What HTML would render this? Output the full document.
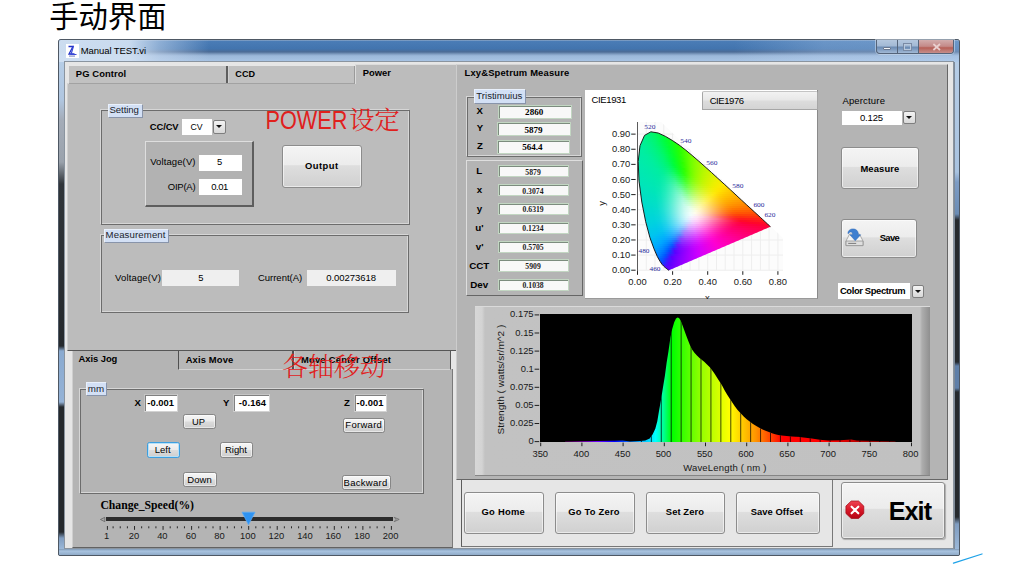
<!DOCTYPE html>
<html lang="zh"><head><meta charset="utf-8"><title>手动界面 - Manual TEST.vi</title>
<style>
html,body{margin:0;padding:0}
body{width:1016px;height:574px;background:#fff;position:relative;overflow:hidden;font-family:'Liberation Sans','Noto Sans CJK SC',sans-serif;color:#000}
body>div,body>span,body>svg{position:absolute;box-sizing:border-box}
.t{white-space:nowrap;line-height:1;display:block}
.btn{border:1px solid #8c8c8c;border-radius:3px;background:linear-gradient(#f4f4f4 0%,#ececec 46%,#dedede 48%,#d0d0d0 100%);box-shadow:inset 0 0 0 1px rgba(255,255,255,.55)}
.sbtn{border:1px solid #868686;border-radius:2.5px;background:linear-gradient(#f6f6f6 0%,#ebebeb 48%,#dcdcdc 52%,#cecece 100%);box-shadow:inset 0 0 0 1px rgba(255,255,255,.5)}
.grp{border:1px solid #6c6c6c;box-shadow:-1px -1px 0 #d6d6d6,inset -1px -1px 0 #d6d6d6}
.lbl{background:#d3e0f5;box-shadow:1px 1px 0 #8894aa,inset 1px 1px 0 #e9f0fb}
.wh{background:#fff}
.ind{background:#f8f8f8;border:1.2px solid #c2d6c2;box-shadow:inset 1px 1px 0 #7c8c7e}
.dd{border:1px solid #7e7e7e;background:linear-gradient(#f4f4f4,#d8d8d8);border-radius:2px}
.dd:after{content:"";position:absolute;left:50%;top:50%;margin:-1.6px 0 0 -3px;border:3px solid transparent;border-top:3.6px solid #111;border-bottom:0}

</style></head>
<body>
<div style="left:58px;top:39px;width:902px;height:516.5px;border-radius:3px 3px 2px 2px;background:#b3cbe5;border:1px solid #4e5864;"></div>
<div style="left:59px;top:40px;width:900px;height:22px;border-radius:2px 2px 0 0;background:linear-gradient(180deg,#93abc9 0,#4a7cb6 6%,#4274ae 40%,#4c6b95 54%,#7f9cc0 64%,#9cb8da 72%,#a9c5e5 100%);"></div>
<div style="left:59px;top:40px;width:900px;height:22px;border-radius:2px 2px 0 0;background:linear-gradient(90deg,rgba(208,224,242,.97) 0,rgba(208,224,242,.95) 70px,rgba(200,218,240,.55) 100px,rgba(200,218,240,0) 150px,rgba(200,218,240,0) 60%,rgba(190,215,245,.0) 75%,rgba(190,215,245,.28) 85%,rgba(190,215,245,.3) 100%);"></div>
<div style="left:59px;top:62px;width:5.5px;height:487px;background:linear-gradient(180deg,#b6cde6 0,#b0c6e0 38px,#a4acb8 58px,#9aa2ac 100px,#30353a 122px,#25292d 284px,#8aaad0 289px,#94b2d6 340px,#25292d 345px,#25292d 470px,#7f9cc0 476px,#9bb8d8 100%);border-right:1px solid #7e8a98"></div>
<div style="left:953.5px;top:62px;width:5.5px;height:487px;background:linear-gradient(180deg,#b6cde6 0,#a9c3e0 110px,#7d9cc4 120px,#6a8cb5 152px,#25292d 158px,#25292d 300px,#5f7fa8 304px,#5f7fa8 326px,#25292d 330px,#25292d 455px,#7f9cc0 462px,#9bb8d8 100%);border-left:1px solid #7e8a98"></div>
<div style="left:59px;top:549px;width:900px;height:6px;background:linear-gradient(180deg,#7f9ab8 0,#a9c3df 35%,#8fabc9 100%);border-radius:0 0 2px 2px"></div>
<div style="left:876.4px;top:39.5px;width:77.2px;height:14.5px;border:1px solid #55647a;border-top:0;border-radius:0 0 4px 4px;background:linear-gradient(#b4c7de 0,#a3b9d5 45%,#6c8bb3 55%,#7d9abf 70%,#a2b9d5 100%);overflow:hidden;box-shadow:0 0 0 1px rgba(220,232,246,.5)"><div style="position:absolute;left:20px;top:0;width:1px;height:14px;background:#55647a"></div><div style="position:absolute;left:40.5px;top:0;width:1px;height:14px;background:#55647a"></div><div style="position:absolute;left:41.5px;top:0;width:36px;height:14px;background:linear-gradient(#d2acac 0,#c48a88 45%,#b65e56 56%,#bd7670 72%,#c99694 100%)"></div></div>
<div style="left:883px;top:47.2px;width:8.2px;height:3px;background:#f4f6fa;border:.7px solid #6a7890;border-radius:1px"></div>
<div style="left:903.8px;top:44px;width:7.5px;height:6px;border:1.6px solid #b9c9dd;outline:.6px solid #7a8aa4;outline-offset:-.3px"></div>
<svg style="left:929px;top:42px" width="16" height="10" viewBox="0 0 16 10"><path d="M4.4 2L11 8M11 2L4.4 8" stroke="#ead0cf" stroke-width="1.7" fill="none"/></svg>
<svg style="left:0;top:0" width="1016" height="574"><rect x="64.4" y="44.6" width="12.5" height="12.3" fill="#fff"/><path d="M66.3 46H70.2L66.5 53.4" stroke="#3a5cd0" stroke-width="1.3" fill="none"/><path d="M73.1 46L69.4 53.2H74.8" stroke="#1a2cc0" stroke-width="1.7" fill="none"/><path d="M68.2 55.4h1M70 55.4h.8M71.6 55.4h1.4" stroke="#7484cc" stroke-width="1"/></svg>
<div style="left:58px;top:39px;width:902px;height:516.5px;border-radius:3px 3px 2px 2px;background:#b3cbe5;border:1px solid #4e5864;"></div>
<div style="left:59px;top:40px;width:900px;height:22px;border-radius:2px 2px 0 0;background:linear-gradient(180deg,#93abc9 0,#4a7cb6 6%,#4274ae 40%,#4c6b95 54%,#7f9cc0 64%,#9cb8da 72%,#a9c5e5 100%);"></div>
<div style="left:59px;top:40px;width:900px;height:22px;border-radius:2px 2px 0 0;background:linear-gradient(90deg,rgba(208,224,242,.97) 0,rgba(208,224,242,.95) 70px,rgba(200,218,240,.55) 100px,rgba(200,218,240,0) 150px,rgba(200,218,240,0) 60%,rgba(190,215,245,.0) 75%,rgba(190,215,245,.28) 85%,rgba(190,215,245,.3) 100%);"></div>
<div style="left:59px;top:62px;width:5.5px;height:487px;background:linear-gradient(180deg,#b6cde6 0,#b0c6e0 38px,#a4acb8 58px,#9aa2ac 100px,#30353a 122px,#25292d 284px,#8aaad0 289px,#94b2d6 340px,#25292d 345px,#25292d 470px,#7f9cc0 476px,#9bb8d8 100%);border-right:1px solid #7e8a98"></div>
<div style="left:953.5px;top:62px;width:5.5px;height:487px;background:linear-gradient(180deg,#b6cde6 0,#a9c3e0 110px,#7d9cc4 120px,#6a8cb5 152px,#25292d 158px,#25292d 300px,#5f7fa8 304px,#5f7fa8 326px,#25292d 330px,#25292d 455px,#7f9cc0 462px,#9bb8d8 100%);border-left:1px solid #7e8a98"></div>
<div style="left:59px;top:549px;width:900px;height:6px;background:linear-gradient(180deg,#7f9ab8 0,#a9c3df 35%,#8fabc9 100%);border-radius:0 0 2px 2px"></div>
<div style="left:876.4px;top:39.5px;width:77.2px;height:14.5px;border:1px solid #55647a;border-top:0;border-radius:0 0 4px 4px;background:linear-gradient(#b4c7de 0,#a3b9d5 45%,#6c8bb3 55%,#7d9abf 70%,#a2b9d5 100%);overflow:hidden;box-shadow:0 0 0 1px rgba(220,232,246,.5)"><div style="position:absolute;left:20px;top:0;width:1px;height:14px;background:#55647a"></div><div style="position:absolute;left:40.5px;top:0;width:1px;height:14px;background:#55647a"></div><div style="position:absolute;left:41.5px;top:0;width:36px;height:14px;background:linear-gradient(#d2acac 0,#c48a88 45%,#b65e56 56%,#bd7670 72%,#c99694 100%)"></div></div>
<div style="left:883px;top:47.2px;width:8.2px;height:3px;background:#f4f6fa;border:.7px solid #6a7890;border-radius:1px"></div>
<div style="left:903.8px;top:44px;width:7.5px;height:6px;border:1.6px solid #b9c9dd;outline:.6px solid #7a8aa4;outline-offset:-.3px"></div>
<svg style="left:929px;top:42px" width="16" height="10" viewBox="0 0 16 10"><path d="M4.4 2L11 8M11 2L4.4 8" stroke="#ead0cf" stroke-width="1.7" fill="none"/></svg>
<svg style="left:66px;top:44px" width="13" height="14" viewBox="0 0 13 14"><rect width="13" height="14" fill="#fff"/><path d="M2.5 2.5H7L3 10H8.5" stroke="#2233c8" stroke-width="1.3" fill="none"/><path d="M7.5 2L5 10.5H10.5" stroke="#3a4ad8" stroke-width="1.2" fill="none"/><rect x="3" y="11.5" width="6" height="1.2" fill="#8a94c8"/></svg>
<div style="left:64px;top:61px;width:890px;height:488px;background:#e6e6e6;border:1px solid #8a949f;"></div>
<div style="left:67px;top:83px;width:389px;height:268px;background:#bcbcbc;border-top:1px solid #d6d6d6;border-left:1px solid #d0d0d0;border-bottom:1px solid #565656;"></div>
<div style="left:69px;top:66px;width:286px;height:17.5px;background:#c1c1c1;border-bottom:1px solid #a2a2a2;border-right:1px solid #9a9a9a;"></div>
<div style="left:226px;top:66px;width:1.5px;height:17px;background:#5e5e5e"></div>
<div style="left:227.5px;top:66px;width:1px;height:17px;background:#d0d0d0"></div>
<div style="left:355px;top:63.5px;width:101px;height:20.5px;background:#bcbcbc;border-top:1px solid #dcdcdc;border-left:1px solid #dcdcdc;"></div>
<div class="grp" style="left:100.5px;top:110.2px;width:309px;height:114.4px;"></div>
<div class="lbl" style="left:108px;top:103.5px;width:33.5px;height:13.8px;"></div>
<div class="wh" style="left:181.8px;top:119px;width:30px;height:15.6px;"></div>
<div class="dd" style="left:212.7px;top:120px;width:12.9px;height:13.9px;"></div>
<div style="left:145px;top:141px;width:109.3px;height:65.8px;background:#b2b2b2;border-top:1px solid #dedede;border-left:1px solid #dedede;border-right:2px solid #5e5e5e;border-bottom:2px solid #5e5e5e;"></div>
<div class="wh" style="left:199px;top:155px;width:43px;height:16px;"></div>
<div class="wh" style="left:199px;top:179px;width:43px;height:16px;"></div>
<div class="btn" style="left:282.2px;top:145.4px;width:79.6px;height:42.9px;"></div>
<div class="grp" style="left:100.8px;top:235.3px;width:308.7px;height:77.3px;"></div>
<div class="lbl" style="left:104.3px;top:228.7px;width:63.8px;height:13.6px;"></div>
<div style="left:162.1px;top:270px;width:77.3px;height:16.4px;background:#efefef"></div>
<div style="left:306.7px;top:270px;width:89.8px;height:16.4px;background:#efefef"></div>
<div style="left:71.5px;top:351px;width:381px;height:196.5px;background:#b4b4b4;border-left:1px solid #cfcfcf;border-bottom:1.4px solid #626262;border-right:1px solid #7a7a7a;"></div>
<div style="left:178px;top:351px;width:273px;height:18.5px;background:#b7b7b7;border-left:1.5px solid #505050;border-bottom:1px solid #d2d2d2;border-right:1.5px solid #585858;"></div>
<div style="left:451px;top:351px;width:2px;height:18.3px;background:#e6e6e6"></div>
<div style="left:292px;top:351px;width:1.5px;height:18px;background:#505050"></div>
<div style="left:293.5px;top:351px;width:1px;height:18px;background:#cdcdcd"></div>
<div class="grp" style="left:80.3px;top:388.8px;width:344.2px;height:104.8px;"></div>
<div class="lbl" style="left:85.8px;top:381.9px;width:20.4px;height:13.3px;"></div>
<div style="left:143.6px;top:394.4px;width:34px;height:17.6px;background:#fff;border:1.6px solid #c5c5c5;border-right-color:#d2d2d2;border-bottom-color:#d2d2d2;box-shadow:inset 1px 1px 0 #808080"></div>
<div style="left:232.7px;top:394.4px;width:37.3px;height:17.6px;background:#fff;border:1.6px solid #c5c5c5;border-right-color:#d2d2d2;border-bottom-color:#d2d2d2;box-shadow:inset 1px 1px 0 #808080"></div>
<div style="left:353.6px;top:394.4px;width:33px;height:17.6px;background:#fff;border:1.6px solid #c5c5c5;border-right-color:#d2d2d2;border-bottom-color:#d2d2d2;box-shadow:inset 1px 1px 0 #808080"></div>
<div class="sbtn" style="left:183px;top:414px;width:32.8px;height:15.2px;"></div>
<div class="sbtn" style="left:342.7px;top:418px;width:42.8px;height:15.2px;"></div>
<div class="sbtn" style="left:147px;top:442px;width:33.2px;height:15.6px;border-color:#3c9fe0;box-shadow:inset 0 0 0 1px #b6e0f8;"></div>
<div class="sbtn" style="left:220px;top:442px;width:32.8px;height:15.6px;"></div>
<div class="sbtn" style="left:183.4px;top:472px;width:33.2px;height:15.2px;"></div>
<div class="sbtn" style="left:341.9px;top:475.3px;width:48.7px;height:14.9px;"></div>
<div style="left:106px;top:517.3px;width:286.5px;height:3.3px;background:#2c2c2c"></div>
<svg style="left:0;top:0" width="1016" height="574"><path d="M104.8 517.3L100.4 519.5L104.8 521.7Z" fill="#a9a9a9" stroke="#666" stroke-width=".8"/><path d="M394.2 517.3L399.2 519.4L394.2 521.7L396 519.4Z" fill="#b0b0b0" stroke="#6a6a6a" stroke-width=".8"/></svg>
<svg style="left:0;top:0" width="1016" height="574" fill="#2a2a2a"><rect x="106.90" y="526" width="1" height="3.8"/><rect x="112.61" y="526.3" width="1" height="2"/><rect x="119.74" y="526.3" width="1" height="2"/><rect x="126.88" y="526.3" width="1" height="2"/><rect x="134.01" y="526" width="1" height="3.8"/><rect x="141.15" y="526.3" width="1" height="2"/><rect x="148.29" y="526.3" width="1" height="2"/><rect x="155.42" y="526.3" width="1" height="2"/><rect x="162.56" y="526" width="1" height="3.8"/><rect x="169.69" y="526.3" width="1" height="2"/><rect x="176.83" y="526.3" width="1" height="2"/><rect x="183.96" y="526.3" width="1" height="2"/><rect x="191.10" y="526" width="1" height="3.8"/><rect x="198.23" y="526.3" width="1" height="2"/><rect x="205.37" y="526.3" width="1" height="2"/><rect x="212.51" y="526.3" width="1" height="2"/><rect x="219.64" y="526" width="1" height="3.8"/><rect x="226.78" y="526.3" width="1" height="2"/><rect x="233.91" y="526.3" width="1" height="2"/><rect x="241.05" y="526.3" width="1" height="2"/><rect x="248.18" y="526" width="1" height="3.8"/><rect x="255.32" y="526.3" width="1" height="2"/><rect x="262.45" y="526.3" width="1" height="2"/><rect x="269.59" y="526.3" width="1" height="2"/><rect x="276.72" y="526" width="1" height="3.8"/><rect x="283.86" y="526.3" width="1" height="2"/><rect x="291.00" y="526.3" width="1" height="2"/><rect x="298.13" y="526.3" width="1" height="2"/><rect x="305.27" y="526" width="1" height="3.8"/><rect x="312.40" y="526.3" width="1" height="2"/><rect x="319.54" y="526.3" width="1" height="2"/><rect x="326.67" y="526.3" width="1" height="2"/><rect x="333.81" y="526" width="1" height="3.8"/><rect x="340.94" y="526.3" width="1" height="2"/><rect x="348.08" y="526.3" width="1" height="2"/><rect x="355.22" y="526.3" width="1" height="2"/><rect x="362.35" y="526" width="1" height="3.8"/><rect x="369.49" y="526.3" width="1" height="2"/><rect x="376.62" y="526.3" width="1" height="2"/><rect x="383.76" y="526.3" width="1" height="2"/><rect x="390.89" y="526" width="1" height="3.8"/></svg>
<svg style="left:241px;top:511px" width="15" height="15" viewBox="0 0 15 15"><path d="M1 1.2H14L7.5 13.8Z" fill="#2e93f2" stroke="#5aaaf6" stroke-width=".8"/></svg>
<div style="left:455.8px;top:63.5px;width:492.2px;height:416.8px;background:#b4b4b4;border-top:1px solid #d4d4d4;border-left:1.2px solid #cdcdcd;border-right:1.2px solid #666;border-bottom:1.2px solid #666;"></div>
<div class="grp" style="left:466.9px;top:96.6px;width:115.1px;height:60px;"></div>
<div class="lbl" style="left:474.2px;top:89.1px;width:50.8px;height:13.8px;"></div>
<div class="ind" style="left:498.1px;top:104.5px;width:73.5px;height:14px;"></div>
<div class="ind" style="left:497.3px;top:122.3px;width:73.5px;height:13.7px;"></div>
<div class="ind" style="left:496.7px;top:140.1px;width:73.3px;height:13.9px;"></div>
<div style="left:466px;top:160.3px;width:116.6px;height:136.1px;border-top:1px solid #dedede;border-left:1px solid #dedede;border-right:1.5px solid #666;border-bottom:1.5px solid #666;"></div>
<div class="ind" style="left:498.4px;top:164.9px;width:70.2px;height:12.4px;"></div>
<div class="ind" style="left:498.4px;top:183.9px;width:70.2px;height:12.4px;"></div>
<div class="ind" style="left:498.4px;top:202.8px;width:70.2px;height:12.4px;"></div>
<div class="ind" style="left:498.4px;top:221.8px;width:70.2px;height:12.4px;"></div>
<div class="ind" style="left:498.4px;top:240.7px;width:70.2px;height:12.4px;"></div>
<div class="ind" style="left:498.4px;top:259.4px;width:70.2px;height:12.4px;"></div>
<div class="ind" style="left:498.4px;top:278.6px;width:70.2px;height:12.4px;"></div>
<div style="left:584.6px;top:90.2px;width:233.8px;height:209.3px;background:#fff;border-right:1px solid #8a8a8a;border-bottom:1px solid #9a9a9a"></div>
<div style="left:702.4px;top:91.2px;width:115.2px;height:19.2px;background:linear-gradient(#f2f2f2 0,#e8e8e8 45%,#dcdcdc 55%,#d4d4d4 100%);border:1px solid #a6a6a6;border-top-color:#c4c4c4;border-radius:2px 2px 0 0"></div>
<svg style="left:0;top:0" width="1016" height="574" viewBox="0 0 1016 574">
<defs><clipPath id="hs"><path d="M669.0,270.2 668.9,270.2 668.5,270.1 668.1,269.8 667.3,269.2 666.7,268.7 665.8,268.0 664.8,267.2 663.6,266.0 662.0,264.3 660.0,261.3 657.3,256.5 654.0,248.8 649.9,237.5 645.7,221.7 641.8,202.1 639.0,181.1 638.2,161.6 640.0,145.7 644.5,135.4 650.9,131.8 658.2,133.0 665.5,136.4 672.4,140.5 679.1,145.0 685.6,150.0 692.1,155.4 698.6,161.0 705.0,166.7 711.5,172.5 717.9,178.4 724.2,184.1 730.3,189.7 736.1,195.1 741.6,200.2 746.6,204.8 751.0,208.8 754.8,212.3 758.0,215.2 760.6,217.6 762.7,219.5 765.6,222.2 767.6,224.1 769.6,225.9 770.5,226.7Z"/></clipPath><clipPath id="gridclip"><path d="M637.5 122H661L783 238V271H637.5Z"/></clipPath><linearGradient id="c0" gradientUnits="userSpaceOnUse" x1="649.0" x2="653.8" y1="0" y2="0"><stop offset="0.000" stop-color="#00f66e"/><stop offset="0.500" stop-color="#00f76c"/><stop offset="1.000" stop-color="#00f76a"/></linearGradient><linearGradient id="c1" gradientUnits="userSpaceOnUse" x1="645.5" x2="661.8" y1="0" y2="0"><stop offset="0.000" stop-color="#00f47c"/><stop offset="0.333" stop-color="#00f672"/><stop offset="0.667" stop-color="#00f959"/><stop offset="1.000" stop-color="#00fc47"/></linearGradient><linearGradient id="c2" gradientUnits="userSpaceOnUse" x1="642.8" x2="666.1" y1="0" y2="0"><stop offset="0.000" stop-color="#00f287"/><stop offset="0.200" stop-color="#00f37f"/><stop offset="0.400" stop-color="#00f671"/><stop offset="0.600" stop-color="#00f95b"/><stop offset="0.800" stop-color="#00fc43"/><stop offset="1.000" stop-color="#00fe35"/></linearGradient><linearGradient id="c3" gradientUnits="userSpaceOnUse" x1="641.9" x2="669.7" y1="0" y2="0"><stop offset="0.000" stop-color="#00f18c"/><stop offset="0.167" stop-color="#00f285"/><stop offset="0.333" stop-color="#00f577"/><stop offset="0.500" stop-color="#00f865"/><stop offset="0.667" stop-color="#00fb4d"/><stop offset="0.833" stop-color="#00ff33"/><stop offset="1.000" stop-color="#07ff27"/></linearGradient><linearGradient id="c4" gradientUnits="userSpaceOnUse" x1="641.0" x2="673.1" y1="0" y2="0"><stop offset="0.000" stop-color="#00f190"/><stop offset="0.167" stop-color="#00f289"/><stop offset="0.333" stop-color="#00f579"/><stop offset="0.500" stop-color="#00f863"/><stop offset="0.667" stop-color="#00fc46"/><stop offset="0.833" stop-color="#05ff2a"/><stop offset="1.000" stop-color="#11ff1c"/></linearGradient><linearGradient id="c5" gradientUnits="userSpaceOnUse" x1="640.1" x2="676.1" y1="0" y2="0"><stop offset="0.000" stop-color="#00f095"/><stop offset="0.143" stop-color="#00f18e"/><stop offset="0.286" stop-color="#00f380"/><stop offset="0.429" stop-color="#00f670"/><stop offset="0.571" stop-color="#00fa54"/><stop offset="0.714" stop-color="#00fe37"/><stop offset="0.857" stop-color="#0fff1f"/><stop offset="1.000" stop-color="#1aff11"/></linearGradient><linearGradient id="c6" gradientUnits="userSpaceOnUse" x1="639.3" x2="679.1" y1="0" y2="0"><stop offset="0.000" stop-color="#00ef9a"/><stop offset="0.125" stop-color="#00f093"/><stop offset="0.250" stop-color="#00f288"/><stop offset="0.375" stop-color="#00f578"/><stop offset="0.500" stop-color="#00f862"/><stop offset="0.625" stop-color="#00fc45"/><stop offset="0.750" stop-color="#05ff2a"/><stop offset="0.875" stop-color="#18ff14"/><stop offset="1.000" stop-color="#22ff07"/></linearGradient><linearGradient id="c7" gradientUnits="userSpaceOnUse" x1="638.5" x2="681.8" y1="0" y2="0"><stop offset="0.000" stop-color="#00ee9e"/><stop offset="0.125" stop-color="#00ef97"/><stop offset="0.250" stop-color="#00f28b"/><stop offset="0.375" stop-color="#00f47a"/><stop offset="0.500" stop-color="#00f861"/><stop offset="0.625" stop-color="#00fd41"/><stop offset="0.750" stop-color="#0aff24"/><stop offset="0.875" stop-color="#1fff0b"/><stop offset="1.000" stop-color="#2dff00"/></linearGradient><linearGradient id="c8" gradientUnits="userSpaceOnUse" x1="638.3" x2="684.4" y1="0" y2="0"><stop offset="0.000" stop-color="#00eea1"/><stop offset="0.111" stop-color="#00ef9b"/><stop offset="0.222" stop-color="#00f190"/><stop offset="0.333" stop-color="#00f381"/><stop offset="0.444" stop-color="#00f66f"/><stop offset="0.556" stop-color="#00fa51"/><stop offset="0.667" stop-color="#00ff31"/><stop offset="0.778" stop-color="#14ff18"/><stop offset="0.889" stop-color="#28ff01"/><stop offset="1.000" stop-color="#3dff00"/></linearGradient><linearGradient id="c9" gradientUnits="userSpaceOnUse" x1="638.0" x2="687.1" y1="0" y2="0"><stop offset="0.000" stop-color="#00eda2"/><stop offset="0.111" stop-color="#00ee9e"/><stop offset="0.222" stop-color="#00f092"/><stop offset="0.333" stop-color="#00f383"/><stop offset="0.444" stop-color="#00f66f"/><stop offset="0.556" stop-color="#00fb4e"/><stop offset="0.667" stop-color="#04ff2c"/><stop offset="0.778" stop-color="#1aff11"/><stop offset="0.889" stop-color="#35ff00"/><stop offset="1.000" stop-color="#4dff00"/></linearGradient><linearGradient id="c10" gradientUnits="userSpaceOnUse" x1="637.8" x2="689.5" y1="0" y2="0"><stop offset="0.000" stop-color="#00eda4"/><stop offset="0.100" stop-color="#00eea1"/><stop offset="0.200" stop-color="#00f097"/><stop offset="0.300" stop-color="#00f28a"/><stop offset="0.400" stop-color="#00f578"/><stop offset="0.500" stop-color="#00f95d"/><stop offset="0.600" stop-color="#00fd3b"/><stop offset="0.700" stop-color="#0fff1e"/><stop offset="0.800" stop-color="#24ff05"/><stop offset="0.900" stop-color="#46ff00"/><stop offset="1.000" stop-color="#5cff00"/></linearGradient><linearGradient id="c11" gradientUnits="userSpaceOnUse" x1="637.6" x2="691.9" y1="0" y2="0"><stop offset="0.000" stop-color="#00eca5"/><stop offset="0.100" stop-color="#00eda2"/><stop offset="0.200" stop-color="#00ef99"/><stop offset="0.300" stop-color="#00f18c"/><stop offset="0.400" stop-color="#00f579"/><stop offset="0.500" stop-color="#00f95c"/><stop offset="0.600" stop-color="#00fe37"/><stop offset="0.700" stop-color="#13ff19"/><stop offset="0.800" stop-color="#2bff00"/><stop offset="0.900" stop-color="#54ff00"/><stop offset="1.000" stop-color="#6bff00"/></linearGradient><linearGradient id="c12" gradientUnits="userSpaceOnUse" x1="637.3" x2="694.3" y1="0" y2="0"><stop offset="0.000" stop-color="#00eca7"/><stop offset="0.091" stop-color="#00eda4"/><stop offset="0.182" stop-color="#00ee9f"/><stop offset="0.273" stop-color="#00f092"/><stop offset="0.364" stop-color="#00f382"/><stop offset="0.455" stop-color="#00f76c"/><stop offset="0.545" stop-color="#00fc49"/><stop offset="0.636" stop-color="#08ff27"/><stop offset="0.727" stop-color="#1fff0b"/><stop offset="0.818" stop-color="#40ff00"/><stop offset="0.909" stop-color="#65ff00"/><stop offset="1.000" stop-color="#79ff00"/></linearGradient><linearGradient id="c13" gradientUnits="userSpaceOnUse" x1="637.1" x2="696.6" y1="0" y2="0"><stop offset="0.000" stop-color="#00eba8"/><stop offset="0.091" stop-color="#00eca6"/><stop offset="0.182" stop-color="#00eea1"/><stop offset="0.273" stop-color="#00f094"/><stop offset="0.364" stop-color="#00f384"/><stop offset="0.455" stop-color="#00f76c"/><stop offset="0.545" stop-color="#00fc46"/><stop offset="0.636" stop-color="#0bff22"/><stop offset="0.727" stop-color="#24ff05"/><stop offset="0.818" stop-color="#4cff00"/><stop offset="0.909" stop-color="#72ff00"/><stop offset="1.000" stop-color="#84fe00"/></linearGradient><linearGradient id="c14" gradientUnits="userSpaceOnUse" x1="636.9" x2="698.9" y1="0" y2="0"><stop offset="0.000" stop-color="#00ebaa"/><stop offset="0.083" stop-color="#00eca7"/><stop offset="0.167" stop-color="#00eda3"/><stop offset="0.250" stop-color="#00ef9a"/><stop offset="0.333" stop-color="#00f18c"/><stop offset="0.417" stop-color="#00f578"/><stop offset="0.500" stop-color="#00f958"/><stop offset="0.583" stop-color="#00ff32"/><stop offset="0.667" stop-color="#18ff13"/><stop offset="0.750" stop-color="#36ff00"/><stop offset="0.833" stop-color="#5fff00"/><stop offset="0.917" stop-color="#80fe00"/><stop offset="1.000" stop-color="#90fc00"/></linearGradient><linearGradient id="c15" gradientUnits="userSpaceOnUse" x1="636.7" x2="701.2" y1="0" y2="0"><stop offset="0.000" stop-color="#00eaab"/><stop offset="0.083" stop-color="#00eba9"/><stop offset="0.167" stop-color="#00eda4"/><stop offset="0.250" stop-color="#00ef9d"/><stop offset="0.333" stop-color="#00f18e"/><stop offset="0.417" stop-color="#00f579"/><stop offset="0.500" stop-color="#00f957"/><stop offset="0.583" stop-color="#02ff2e"/><stop offset="0.667" stop-color="#1dff0e"/><stop offset="0.750" stop-color="#42ff00"/><stop offset="0.833" stop-color="#6cff00"/><stop offset="0.917" stop-color="#8bfd00"/><stop offset="1.000" stop-color="#9bfb00"/></linearGradient><linearGradient id="c16" gradientUnits="userSpaceOnUse" x1="636.7" x2="703.5" y1="0" y2="0"><stop offset="0.000" stop-color="#00eaad"/><stop offset="0.077" stop-color="#00ebaa"/><stop offset="0.154" stop-color="#00eca6"/><stop offset="0.231" stop-color="#00eea1"/><stop offset="0.308" stop-color="#00f095"/><stop offset="0.385" stop-color="#00f383"/><stop offset="0.462" stop-color="#00f769"/><stop offset="0.538" stop-color="#00fd40"/><stop offset="0.615" stop-color="#10ff1c"/><stop offset="0.692" stop-color="#2cff00"/><stop offset="0.769" stop-color="#59ff00"/><stop offset="0.846" stop-color="#7efe00"/><stop offset="0.923" stop-color="#98fb00"/><stop offset="1.000" stop-color="#a6fa00"/></linearGradient><linearGradient id="c17" gradientUnits="userSpaceOnUse" x1="636.8" x2="705.7" y1="0" y2="0"><stop offset="0.000" stop-color="#00e9ae"/><stop offset="0.077" stop-color="#00eaac"/><stop offset="0.154" stop-color="#00eca7"/><stop offset="0.231" stop-color="#00eda2"/><stop offset="0.308" stop-color="#00f096"/><stop offset="0.385" stop-color="#00f384"/><stop offset="0.462" stop-color="#01f768"/><stop offset="0.538" stop-color="#00fd3c"/><stop offset="0.615" stop-color="#15ff17"/><stop offset="0.692" stop-color="#37ff00"/><stop offset="0.769" stop-color="#66ff00"/><stop offset="0.846" stop-color="#89fd00"/><stop offset="0.923" stop-color="#a3fa00"/><stop offset="1.000" stop-color="#b1f900"/></linearGradient><linearGradient id="c18" gradientUnits="userSpaceOnUse" x1="636.9" x2="708.0" y1="0" y2="0"><stop offset="0.000" stop-color="#00e9af"/><stop offset="0.077" stop-color="#00eaad"/><stop offset="0.154" stop-color="#00eba9"/><stop offset="0.231" stop-color="#00eda3"/><stop offset="0.308" stop-color="#00ef98"/><stop offset="0.385" stop-color="#01f286"/><stop offset="0.462" stop-color="#03f769"/><stop offset="0.538" stop-color="#02fe39"/><stop offset="0.615" stop-color="#1aff11"/><stop offset="0.692" stop-color="#43ff00"/><stop offset="0.769" stop-color="#73ff00"/><stop offset="0.846" stop-color="#93fc00"/><stop offset="0.923" stop-color="#aef900"/><stop offset="1.000" stop-color="#bbf700"/></linearGradient><linearGradient id="c19" gradientUnits="userSpaceOnUse" x1="637.0" x2="710.2" y1="0" y2="0"><stop offset="0.000" stop-color="#00e9b0"/><stop offset="0.071" stop-color="#00e9ae"/><stop offset="0.143" stop-color="#00eaab"/><stop offset="0.214" stop-color="#00eca6"/><stop offset="0.286" stop-color="#00eea0"/><stop offset="0.357" stop-color="#01f18f"/><stop offset="0.429" stop-color="#06f57a"/><stop offset="0.500" stop-color="#07fb52"/><stop offset="0.571" stop-color="#0fff24"/><stop offset="0.643" stop-color="#2bff00"/><stop offset="0.714" stop-color="#5fff00"/><stop offset="0.786" stop-color="#86fd00"/><stop offset="0.857" stop-color="#a2fa00"/><stop offset="0.929" stop-color="#baf800"/><stop offset="1.000" stop-color="#c4f600"/></linearGradient><linearGradient id="c20" gradientUnits="userSpaceOnUse" x1="637.0" x2="712.4" y1="0" y2="0"><stop offset="0.000" stop-color="#00e8b2"/><stop offset="0.071" stop-color="#00e9b0"/><stop offset="0.143" stop-color="#00eaac"/><stop offset="0.214" stop-color="#00eca7"/><stop offset="0.286" stop-color="#00eea1"/><stop offset="0.357" stop-color="#04f192"/><stop offset="0.429" stop-color="#0bf57d"/><stop offset="0.500" stop-color="#0cfb53"/><stop offset="0.571" stop-color="#16ff22"/><stop offset="0.643" stop-color="#38ff01"/><stop offset="0.714" stop-color="#6cff00"/><stop offset="0.786" stop-color="#91fc00"/><stop offset="0.857" stop-color="#adf900"/><stop offset="0.929" stop-color="#c2f600"/><stop offset="1.000" stop-color="#cdf500"/></linearGradient><linearGradient id="c21" gradientUnits="userSpaceOnUse" x1="637.1" x2="714.6" y1="0" y2="0"><stop offset="0.000" stop-color="#00e8b3"/><stop offset="0.067" stop-color="#00e8b1"/><stop offset="0.133" stop-color="#00e9ae"/><stop offset="0.200" stop-color="#00eba9"/><stop offset="0.267" stop-color="#00eda4"/><stop offset="0.333" stop-color="#04ef9a"/><stop offset="0.400" stop-color="#0ff38b"/><stop offset="0.467" stop-color="#14f96c"/><stop offset="0.533" stop-color="#11ff3a"/><stop offset="0.600" stop-color="#29ff0e"/><stop offset="0.667" stop-color="#58ff02"/><stop offset="0.733" stop-color="#83fe00"/><stop offset="0.800" stop-color="#a2fa00"/><stop offset="0.867" stop-color="#bbf800"/><stop offset="0.933" stop-color="#ccf500"/><stop offset="1.000" stop-color="#d6f300"/></linearGradient><linearGradient id="c22" gradientUnits="userSpaceOnUse" x1="637.2" x2="716.8" y1="0" y2="0"><stop offset="0.000" stop-color="#00e7b4"/><stop offset="0.067" stop-color="#00e8b2"/><stop offset="0.133" stop-color="#00e9af"/><stop offset="0.200" stop-color="#00eaab"/><stop offset="0.267" stop-color="#00eca5"/><stop offset="0.333" stop-color="#08ef9e"/><stop offset="0.400" stop-color="#16f48f"/><stop offset="0.467" stop-color="#1cf970"/><stop offset="0.533" stop-color="#1bff3c"/><stop offset="0.600" stop-color="#33ff0c"/><stop offset="0.667" stop-color="#67ff04"/><stop offset="0.733" stop-color="#8ffd00"/><stop offset="0.800" stop-color="#aef900"/><stop offset="0.867" stop-color="#c4f600"/><stop offset="0.933" stop-color="#d5f300"/><stop offset="1.000" stop-color="#dff200"/></linearGradient><linearGradient id="c23" gradientUnits="userSpaceOnUse" x1="637.3" x2="719.0" y1="0" y2="0"><stop offset="0.000" stop-color="#00e7b5"/><stop offset="0.067" stop-color="#00e7b4"/><stop offset="0.133" stop-color="#00e9b0"/><stop offset="0.200" stop-color="#00eaac"/><stop offset="0.267" stop-color="#01eca7"/><stop offset="0.333" stop-color="#0defa2"/><stop offset="0.400" stop-color="#1ef495"/><stop offset="0.467" stop-color="#25fa75"/><stop offset="0.533" stop-color="#26ff3e"/><stop offset="0.600" stop-color="#43ff12"/><stop offset="0.667" stop-color="#76ff07"/><stop offset="0.733" stop-color="#9bfb01"/><stop offset="0.800" stop-color="#b9f800"/><stop offset="0.867" stop-color="#cdf500"/><stop offset="0.933" stop-color="#def200"/><stop offset="1.000" stop-color="#e7f100"/></linearGradient><linearGradient id="c24" gradientUnits="userSpaceOnUse" x1="637.4" x2="721.2" y1="0" y2="0"><stop offset="0.000" stop-color="#00e6b7"/><stop offset="0.062" stop-color="#00e7b5"/><stop offset="0.125" stop-color="#00e8b2"/><stop offset="0.188" stop-color="#00e9ae"/><stop offset="0.250" stop-color="#01ebaa"/><stop offset="0.312" stop-color="#0ceea7"/><stop offset="0.375" stop-color="#1ff29f"/><stop offset="0.438" stop-color="#2ef78d"/><stop offset="0.500" stop-color="#2cfe5d"/><stop offset="0.562" stop-color="#3cff28"/><stop offset="0.625" stop-color="#68ff13"/><stop offset="0.688" stop-color="#90fd08"/><stop offset="0.750" stop-color="#aff901"/><stop offset="0.812" stop-color="#c7f600"/><stop offset="0.875" stop-color="#d9f300"/><stop offset="0.938" stop-color="#e8f100"/><stop offset="1.000" stop-color="#efef00"/></linearGradient><linearGradient id="c25" gradientUnits="userSpaceOnUse" x1="637.4" x2="723.3" y1="0" y2="0"><stop offset="0.000" stop-color="#00e6b8"/><stop offset="0.062" stop-color="#00e7b6"/><stop offset="0.125" stop-color="#00e8b3"/><stop offset="0.188" stop-color="#00e9b0"/><stop offset="0.250" stop-color="#02ebac"/><stop offset="0.312" stop-color="#11eeaa"/><stop offset="0.375" stop-color="#27f2a4"/><stop offset="0.438" stop-color="#39f793"/><stop offset="0.500" stop-color="#36fe61"/><stop offset="0.562" stop-color="#48ff2a"/><stop offset="0.625" stop-color="#79ff19"/><stop offset="0.688" stop-color="#9dfc0c"/><stop offset="0.750" stop-color="#bbf803"/><stop offset="0.812" stop-color="#d0f400"/><stop offset="0.875" stop-color="#e2f200"/><stop offset="0.938" stop-color="#f0ee00"/><stop offset="1.000" stop-color="#f6ec00"/></linearGradient><linearGradient id="c26" gradientUnits="userSpaceOnUse" x1="637.6" x2="725.5" y1="0" y2="0"><stop offset="0.000" stop-color="#00e5b9"/><stop offset="0.062" stop-color="#00e6b8"/><stop offset="0.125" stop-color="#00e7b5"/><stop offset="0.188" stop-color="#00e8b1"/><stop offset="0.250" stop-color="#05eaae"/><stop offset="0.312" stop-color="#17eead"/><stop offset="0.375" stop-color="#31f3aa"/><stop offset="0.438" stop-color="#45f89a"/><stop offset="0.500" stop-color="#41ff65"/><stop offset="0.562" stop-color="#59ff31"/><stop offset="0.625" stop-color="#8aff1f"/><stop offset="0.688" stop-color="#abfa10"/><stop offset="0.750" stop-color="#c6f605"/><stop offset="0.812" stop-color="#daf300"/><stop offset="0.875" stop-color="#ecf000"/><stop offset="0.938" stop-color="#f6ec00"/><stop offset="1.000" stop-color="#fce900"/></linearGradient><linearGradient id="c27" gradientUnits="userSpaceOnUse" x1="637.9" x2="727.7" y1="0" y2="0"><stop offset="0.000" stop-color="#00e5bb"/><stop offset="0.059" stop-color="#00e5b9"/><stop offset="0.118" stop-color="#00e7b6"/><stop offset="0.176" stop-color="#00e8b3"/><stop offset="0.235" stop-color="#04e9b0"/><stop offset="0.294" stop-color="#16edb1"/><stop offset="0.353" stop-color="#32f1b3"/><stop offset="0.412" stop-color="#4bf6a9"/><stop offset="0.471" stop-color="#52fc87"/><stop offset="0.529" stop-color="#58ff4e"/><stop offset="0.588" stop-color="#81ff32"/><stop offset="0.647" stop-color="#a5fc20"/><stop offset="0.706" stop-color="#c1f810"/><stop offset="0.765" stop-color="#d5f405"/><stop offset="0.824" stop-color="#e7f100"/><stop offset="0.882" stop-color="#f4ed00"/><stop offset="0.941" stop-color="#fee900"/><stop offset="1.000" stop-color="#ffe200"/></linearGradient><linearGradient id="c28" gradientUnits="userSpaceOnUse" x1="638.1" x2="729.9" y1="0" y2="0"><stop offset="0.000" stop-color="#00e4bc"/><stop offset="0.059" stop-color="#00e5bb"/><stop offset="0.118" stop-color="#00e6b8"/><stop offset="0.176" stop-color="#00e7b5"/><stop offset="0.235" stop-color="#07e9b3"/><stop offset="0.294" stop-color="#1dedb4"/><stop offset="0.353" stop-color="#3bf1b7"/><stop offset="0.412" stop-color="#58f7b0"/><stop offset="0.471" stop-color="#5efd8c"/><stop offset="0.529" stop-color="#67ff52"/><stop offset="0.588" stop-color="#93ff3a"/><stop offset="0.647" stop-color="#b4fb26"/><stop offset="0.706" stop-color="#ccf615"/><stop offset="0.765" stop-color="#e0f207"/><stop offset="0.824" stop-color="#f0ee00"/><stop offset="0.882" stop-color="#fbea00"/><stop offset="0.941" stop-color="#ffe000"/><stop offset="1.000" stop-color="#ffd800"/></linearGradient><linearGradient id="c29" gradientUnits="userSpaceOnUse" x1="638.4" x2="732.0" y1="0" y2="0"><stop offset="0.000" stop-color="#00e3be"/><stop offset="0.056" stop-color="#00e4bc"/><stop offset="0.111" stop-color="#00e5ba"/><stop offset="0.167" stop-color="#00e6b7"/><stop offset="0.222" stop-color="#06e8b5"/><stop offset="0.278" stop-color="#1becb7"/><stop offset="0.333" stop-color="#39f0ba"/><stop offset="0.389" stop-color="#59f5ba"/><stop offset="0.444" stop-color="#6cfaa9"/><stop offset="0.500" stop-color="#6dff74"/><stop offset="0.556" stop-color="#8dff4f"/><stop offset="0.611" stop-color="#b0fc3a"/><stop offset="0.667" stop-color="#caf826"/><stop offset="0.722" stop-color="#ddf414"/><stop offset="0.778" stop-color="#eef007"/><stop offset="0.833" stop-color="#faea00"/><stop offset="0.889" stop-color="#ffe100"/><stop offset="0.944" stop-color="#ffd500"/><stop offset="1.000" stop-color="#ffcf00"/></linearGradient><linearGradient id="c30" gradientUnits="userSpaceOnUse" x1="638.7" x2="734.2" y1="0" y2="0"><stop offset="0.000" stop-color="#00e2bf"/><stop offset="0.056" stop-color="#00e3be"/><stop offset="0.111" stop-color="#00e4bb"/><stop offset="0.167" stop-color="#00e6b8"/><stop offset="0.222" stop-color="#09e8b7"/><stop offset="0.278" stop-color="#21ecba"/><stop offset="0.333" stop-color="#43f0bf"/><stop offset="0.389" stop-color="#66f6c1"/><stop offset="0.444" stop-color="#7afbb0"/><stop offset="0.500" stop-color="#7cff7a"/><stop offset="0.556" stop-color="#a0ff59"/><stop offset="0.611" stop-color="#bffb43"/><stop offset="0.667" stop-color="#d6f72d"/><stop offset="0.722" stop-color="#e8f218"/><stop offset="0.778" stop-color="#f6ec08"/><stop offset="0.833" stop-color="#ffe500"/><stop offset="0.889" stop-color="#ffd700"/><stop offset="0.944" stop-color="#ffcb00"/><stop offset="1.000" stop-color="#ffc500"/></linearGradient><linearGradient id="c31" gradientUnits="userSpaceOnUse" x1="638.9" x2="736.4" y1="0" y2="0"><stop offset="0.000" stop-color="#00e2c1"/><stop offset="0.056" stop-color="#00e2c0"/><stop offset="0.111" stop-color="#00e3bd"/><stop offset="0.167" stop-color="#00e5ba"/><stop offset="0.222" stop-color="#0de8ba"/><stop offset="0.278" stop-color="#28ecbe"/><stop offset="0.333" stop-color="#4df1c4"/><stop offset="0.389" stop-color="#72f6c8"/><stop offset="0.444" stop-color="#87fbb7"/><stop offset="0.500" stop-color="#8bff80"/><stop offset="0.556" stop-color="#b2fe64"/><stop offset="0.611" stop-color="#cefa4b"/><stop offset="0.667" stop-color="#e1f533"/><stop offset="0.722" stop-color="#f2f01c"/><stop offset="0.778" stop-color="#fee90a"/><stop offset="0.833" stop-color="#ffd901"/><stop offset="0.889" stop-color="#ffcc00"/><stop offset="0.944" stop-color="#ffc200"/><stop offset="1.000" stop-color="#ffbd00"/></linearGradient><linearGradient id="c32" gradientUnits="userSpaceOnUse" x1="639.2" x2="738.6" y1="0" y2="0"><stop offset="0.000" stop-color="#00e1c2"/><stop offset="0.053" stop-color="#00e1c1"/><stop offset="0.105" stop-color="#00e2bf"/><stop offset="0.158" stop-color="#00e4bd"/><stop offset="0.211" stop-color="#0ce7bc"/><stop offset="0.263" stop-color="#26ebc0"/><stop offset="0.316" stop-color="#4aefc6"/><stop offset="0.368" stop-color="#71f5cd"/><stop offset="0.421" stop-color="#90fac9"/><stop offset="0.474" stop-color="#92ffa1"/><stop offset="0.526" stop-color="#afff7b"/><stop offset="0.579" stop-color="#cdfb63"/><stop offset="0.632" stop-color="#e1f74a"/><stop offset="0.684" stop-color="#f2f230"/><stop offset="0.737" stop-color="#fdeb19"/><stop offset="0.789" stop-color="#ffda08"/><stop offset="0.842" stop-color="#ffcb00"/><stop offset="0.895" stop-color="#ffc100"/><stop offset="0.947" stop-color="#ffb800"/><stop offset="1.000" stop-color="#ffb400"/></linearGradient><linearGradient id="c33" gradientUnits="userSpaceOnUse" x1="639.5" x2="740.8" y1="0" y2="0"><stop offset="0.000" stop-color="#00e0c4"/><stop offset="0.053" stop-color="#00e0c3"/><stop offset="0.105" stop-color="#00e1c1"/><stop offset="0.158" stop-color="#01e3bf"/><stop offset="0.211" stop-color="#10e6bf"/><stop offset="0.263" stop-color="#2debc3"/><stop offset="0.316" stop-color="#53f0ca"/><stop offset="0.368" stop-color="#7cf5d2"/><stop offset="0.421" stop-color="#9efad0"/><stop offset="0.474" stop-color="#a2ffa8"/><stop offset="0.526" stop-color="#c1ff86"/><stop offset="0.579" stop-color="#dafa6d"/><stop offset="0.632" stop-color="#ecf651"/><stop offset="0.684" stop-color="#faef35"/><stop offset="0.737" stop-color="#ffe01b"/><stop offset="0.789" stop-color="#ffce08"/><stop offset="0.842" stop-color="#ffc100"/><stop offset="0.895" stop-color="#ffb700"/><stop offset="0.947" stop-color="#ffaf00"/><stop offset="1.000" stop-color="#ffaa00"/></linearGradient><linearGradient id="c34" gradientUnits="userSpaceOnUse" x1="639.7" x2="742.9" y1="0" y2="0"><stop offset="0.000" stop-color="#00dfc6"/><stop offset="0.053" stop-color="#00e0c5"/><stop offset="0.105" stop-color="#00e1c3"/><stop offset="0.158" stop-color="#02e2c1"/><stop offset="0.211" stop-color="#14e6c2"/><stop offset="0.263" stop-color="#34ebc7"/><stop offset="0.316" stop-color="#5df0ce"/><stop offset="0.368" stop-color="#88f6d7"/><stop offset="0.421" stop-color="#abfbd7"/><stop offset="0.474" stop-color="#b0ffae"/><stop offset="0.526" stop-color="#d0fe91"/><stop offset="0.579" stop-color="#e5f976"/><stop offset="0.632" stop-color="#f6f458"/><stop offset="0.684" stop-color="#ffe938"/><stop offset="0.737" stop-color="#ffd41d"/><stop offset="0.789" stop-color="#ffc309"/><stop offset="0.842" stop-color="#ffb600"/><stop offset="0.895" stop-color="#ffad00"/><stop offset="0.947" stop-color="#ffa500"/><stop offset="1.000" stop-color="#ffa100"/></linearGradient><linearGradient id="c35" gradientUnits="userSpaceOnUse" x1="640.0" x2="745.1" y1="0" y2="0"><stop offset="0.000" stop-color="#00dec7"/><stop offset="0.050" stop-color="#00dfc6"/><stop offset="0.100" stop-color="#00e0c5"/><stop offset="0.150" stop-color="#02e1c3"/><stop offset="0.200" stop-color="#12e4c5"/><stop offset="0.250" stop-color="#31e9c9"/><stop offset="0.300" stop-color="#59efd0"/><stop offset="0.350" stop-color="#84f4d9"/><stop offset="0.400" stop-color="#acf9e0"/><stop offset="0.450" stop-color="#bafecc"/><stop offset="0.500" stop-color="#d1ffa8"/><stop offset="0.550" stop-color="#e7fb8f"/><stop offset="0.600" stop-color="#f6f671"/><stop offset="0.650" stop-color="#ffeb51"/><stop offset="0.700" stop-color="#ffd632"/><stop offset="0.750" stop-color="#ffc417"/><stop offset="0.800" stop-color="#ffb406"/><stop offset="0.850" stop-color="#ffa900"/><stop offset="0.900" stop-color="#ffa100"/><stop offset="0.950" stop-color="#ff9b00"/><stop offset="1.000" stop-color="#ff9700"/></linearGradient><linearGradient id="c36" gradientUnits="userSpaceOnUse" x1="640.2" x2="747.3" y1="0" y2="0"><stop offset="0.000" stop-color="#00dec9"/><stop offset="0.050" stop-color="#00dec8"/><stop offset="0.100" stop-color="#00dfc7"/><stop offset="0.150" stop-color="#03e0c6"/><stop offset="0.200" stop-color="#16e3c8"/><stop offset="0.250" stop-color="#38e9cd"/><stop offset="0.300" stop-color="#62efd4"/><stop offset="0.350" stop-color="#8ff5dd"/><stop offset="0.400" stop-color="#b8fae5"/><stop offset="0.450" stop-color="#c6ffd2"/><stop offset="0.500" stop-color="#dffeb2"/><stop offset="0.550" stop-color="#f1fa98"/><stop offset="0.600" stop-color="#fef378"/><stop offset="0.650" stop-color="#ffdf55"/><stop offset="0.700" stop-color="#ffcb33"/><stop offset="0.750" stop-color="#ffb817"/><stop offset="0.800" stop-color="#ffa805"/><stop offset="0.850" stop-color="#ff9d00"/><stop offset="0.900" stop-color="#ff9600"/><stop offset="0.950" stop-color="#ff9000"/><stop offset="1.000" stop-color="#ff8d00"/></linearGradient><linearGradient id="c37" gradientUnits="userSpaceOnUse" x1="640.6" x2="749.4" y1="0" y2="0"><stop offset="0.000" stop-color="#00ddcb"/><stop offset="0.050" stop-color="#00ddca"/><stop offset="0.100" stop-color="#00dec9"/><stop offset="0.150" stop-color="#04dfc8"/><stop offset="0.200" stop-color="#1be3cb"/><stop offset="0.250" stop-color="#3fe8d1"/><stop offset="0.300" stop-color="#6cefd9"/><stop offset="0.350" stop-color="#9af5e2"/><stop offset="0.400" stop-color="#c3fbea"/><stop offset="0.450" stop-color="#d2ffd7"/><stop offset="0.500" stop-color="#ebfdbc"/><stop offset="0.550" stop-color="#faf8a0"/><stop offset="0.600" stop-color="#ffe97c"/><stop offset="0.650" stop-color="#ffd456"/><stop offset="0.700" stop-color="#ffbe33"/><stop offset="0.750" stop-color="#ffaa17"/><stop offset="0.800" stop-color="#ff9b05"/><stop offset="0.850" stop-color="#ff9100"/><stop offset="0.900" stop-color="#ff8b00"/><stop offset="0.950" stop-color="#ff8500"/><stop offset="1.000" stop-color="#ff8200"/></linearGradient><linearGradient id="c38" gradientUnits="userSpaceOnUse" x1="641.0" x2="751.6" y1="0" y2="0"><stop offset="0.000" stop-color="#00dccd"/><stop offset="0.048" stop-color="#00dccc"/><stop offset="0.095" stop-color="#00dccb"/><stop offset="0.143" stop-color="#04deca"/><stop offset="0.190" stop-color="#1ae1cd"/><stop offset="0.238" stop-color="#3ce7d3"/><stop offset="0.286" stop-color="#67eddb"/><stop offset="0.333" stop-color="#95f4e3"/><stop offset="0.381" stop-color="#c0f9ec"/><stop offset="0.429" stop-color="#dcfeed"/><stop offset="0.476" stop-color="#edfed0"/><stop offset="0.524" stop-color="#fbfab7"/><stop offset="0.571" stop-color="#ffeb96"/><stop offset="0.619" stop-color="#ffd670"/><stop offset="0.667" stop-color="#ffc04b"/><stop offset="0.714" stop-color="#ffab2a"/><stop offset="0.762" stop-color="#ff9810"/><stop offset="0.810" stop-color="#ff8a02"/><stop offset="0.857" stop-color="#ff8300"/><stop offset="0.905" stop-color="#ff7d00"/><stop offset="0.952" stop-color="#ff7900"/><stop offset="1.000" stop-color="#ff7600"/></linearGradient><linearGradient id="c39" gradientUnits="userSpaceOnUse" x1="641.4" x2="753.8" y1="0" y2="0"><stop offset="0.000" stop-color="#00dacf"/><stop offset="0.048" stop-color="#00dbcf"/><stop offset="0.095" stop-color="#00dbce"/><stop offset="0.143" stop-color="#06ddce"/><stop offset="0.190" stop-color="#1ee1d1"/><stop offset="0.238" stop-color="#43e7d7"/><stop offset="0.286" stop-color="#70eddf"/><stop offset="0.333" stop-color="#9ff4e8"/><stop offset="0.381" stop-color="#cafaf0"/><stop offset="0.429" stop-color="#e6fef1"/><stop offset="0.476" stop-color="#f7fed8"/><stop offset="0.524" stop-color="#fff5bd"/><stop offset="0.571" stop-color="#ffe198"/><stop offset="0.619" stop-color="#ffca71"/><stop offset="0.667" stop-color="#ffb24a"/><stop offset="0.714" stop-color="#ff9b29"/><stop offset="0.762" stop-color="#ff880f"/><stop offset="0.810" stop-color="#ff7a01"/><stop offset="0.857" stop-color="#ff7400"/><stop offset="0.905" stop-color="#ff7000"/><stop offset="0.952" stop-color="#ff6c00"/><stop offset="1.000" stop-color="#ff6a00"/></linearGradient><linearGradient id="c40" gradientUnits="userSpaceOnUse" x1="641.9" x2="756.0" y1="0" y2="0"><stop offset="0.000" stop-color="#00d9d1"/><stop offset="0.048" stop-color="#00dad1"/><stop offset="0.095" stop-color="#00dad0"/><stop offset="0.143" stop-color="#07dbd1"/><stop offset="0.190" stop-color="#22e0d5"/><stop offset="0.238" stop-color="#49e6db"/><stop offset="0.286" stop-color="#79ede3"/><stop offset="0.333" stop-color="#a9f4ec"/><stop offset="0.381" stop-color="#d3faf3"/><stop offset="0.429" stop-color="#edfef4"/><stop offset="0.476" stop-color="#fefcde"/><stop offset="0.524" stop-color="#ffecc0"/><stop offset="0.571" stop-color="#ffd699"/><stop offset="0.619" stop-color="#ffbc70"/><stop offset="0.667" stop-color="#ffa149"/><stop offset="0.714" stop-color="#ff8927"/><stop offset="0.762" stop-color="#ff750e"/><stop offset="0.810" stop-color="#ff6902"/><stop offset="0.857" stop-color="#ff6501"/><stop offset="0.905" stop-color="#ff6202"/><stop offset="0.952" stop-color="#ff5f02"/><stop offset="1.000" stop-color="#ff5e03"/></linearGradient><linearGradient id="c41" gradientUnits="userSpaceOnUse" x1="642.3" x2="758.2" y1="0" y2="0"><stop offset="0.000" stop-color="#00d8d3"/><stop offset="0.045" stop-color="#00d9d3"/><stop offset="0.091" stop-color="#00d9d3"/><stop offset="0.136" stop-color="#07dad3"/><stop offset="0.182" stop-color="#1fded7"/><stop offset="0.227" stop-color="#45e4dd"/><stop offset="0.273" stop-color="#73ebe5"/><stop offset="0.318" stop-color="#a2f2ed"/><stop offset="0.364" stop-color="#cef9f4"/><stop offset="0.409" stop-color="#edfdfa"/><stop offset="0.455" stop-color="#fffdec"/><stop offset="0.500" stop-color="#ffedd3"/><stop offset="0.545" stop-color="#ffd6b0"/><stop offset="0.591" stop-color="#ffbc88"/><stop offset="0.636" stop-color="#ffa062"/><stop offset="0.682" stop-color="#ff863e"/><stop offset="0.727" stop-color="#ff6f20"/><stop offset="0.773" stop-color="#ff5f0c"/><stop offset="0.818" stop-color="#ff5704"/><stop offset="0.864" stop-color="#ff5504"/><stop offset="0.909" stop-color="#ff5305"/><stop offset="0.955" stop-color="#ff5105"/><stop offset="1.000" stop-color="#ff5105"/></linearGradient><linearGradient id="c42" gradientUnits="userSpaceOnUse" x1="642.7" x2="760.4" y1="0" y2="0"><stop offset="0.000" stop-color="#00d7d5"/><stop offset="0.045" stop-color="#00d7d5"/><stop offset="0.091" stop-color="#00d7d5"/><stop offset="0.136" stop-color="#08d9d6"/><stop offset="0.182" stop-color="#22dddb"/><stop offset="0.227" stop-color="#4ae3e1"/><stop offset="0.273" stop-color="#79eae9"/><stop offset="0.318" stop-color="#a9f2f1"/><stop offset="0.364" stop-color="#d4f8f8"/><stop offset="0.409" stop-color="#f1fdfd"/><stop offset="0.455" stop-color="#fff2ee"/><stop offset="0.500" stop-color="#ffdfd5"/><stop offset="0.545" stop-color="#ffc5b2"/><stop offset="0.591" stop-color="#ffa78c"/><stop offset="0.636" stop-color="#ff8965"/><stop offset="0.682" stop-color="#ff6e41"/><stop offset="0.727" stop-color="#ff5723"/><stop offset="0.773" stop-color="#ff480f"/><stop offset="0.818" stop-color="#ff4208"/><stop offset="0.864" stop-color="#ff4208"/><stop offset="0.909" stop-color="#ff4208"/><stop offset="0.955" stop-color="#ff4208"/><stop offset="1.000" stop-color="#ff4208"/></linearGradient><linearGradient id="c43" gradientUnits="userSpaceOnUse" x1="643.1" x2="762.5" y1="0" y2="0"><stop offset="0.000" stop-color="#00d6d7"/><stop offset="0.045" stop-color="#00d6d7"/><stop offset="0.091" stop-color="#00d6d8"/><stop offset="0.136" stop-color="#09d7d9"/><stop offset="0.182" stop-color="#25dcde"/><stop offset="0.227" stop-color="#4ee2e5"/><stop offset="0.273" stop-color="#7eeaed"/><stop offset="0.318" stop-color="#aff1f4"/><stop offset="0.364" stop-color="#d9f7fb"/><stop offset="0.409" stop-color="#f7f1ff"/><stop offset="0.455" stop-color="#ffe5f2"/><stop offset="0.500" stop-color="#ffd0dd"/><stop offset="0.545" stop-color="#ffb3bd"/><stop offset="0.591" stop-color="#ff9296"/><stop offset="0.636" stop-color="#ff7170"/><stop offset="0.682" stop-color="#ff544c"/><stop offset="0.727" stop-color="#ff3e2d"/><stop offset="0.773" stop-color="#ff3119"/><stop offset="0.818" stop-color="#ff2e11"/><stop offset="0.864" stop-color="#ff3110"/><stop offset="0.909" stop-color="#ff320f"/><stop offset="0.955" stop-color="#ff330e"/><stop offset="1.000" stop-color="#ff340e"/></linearGradient><linearGradient id="c44" gradientUnits="userSpaceOnUse" x1="643.5" x2="764.7" y1="0" y2="0"><stop offset="0.000" stop-color="#00d5d9"/><stop offset="0.043" stop-color="#00d5da"/><stop offset="0.087" stop-color="#00d5da"/><stop offset="0.130" stop-color="#08d6dc"/><stop offset="0.174" stop-color="#22dae1"/><stop offset="0.217" stop-color="#48dfe7"/><stop offset="0.261" stop-color="#75e6ef"/><stop offset="0.304" stop-color="#a4edf6"/><stop offset="0.348" stop-color="#cef3fc"/><stop offset="0.391" stop-color="#f1e9ff"/><stop offset="0.435" stop-color="#ffdff8"/><stop offset="0.478" stop-color="#ffc9e5"/><stop offset="0.522" stop-color="#ffaecd"/><stop offset="0.565" stop-color="#ff91b2"/><stop offset="0.609" stop-color="#ff7495"/><stop offset="0.652" stop-color="#ff556e"/><stop offset="0.696" stop-color="#ff394d"/><stop offset="0.739" stop-color="#ff2631"/><stop offset="0.783" stop-color="#ff1b20"/><stop offset="0.826" stop-color="#ff1b1b"/><stop offset="0.870" stop-color="#ff1e19"/><stop offset="0.913" stop-color="#ff2018"/><stop offset="0.957" stop-color="#ff2317"/><stop offset="1.000" stop-color="#ff2516"/></linearGradient><linearGradient id="c45" gradientUnits="userSpaceOnUse" x1="643.9" x2="766.9" y1="0" y2="0"><stop offset="0.000" stop-color="#00d4db"/><stop offset="0.043" stop-color="#00d4dc"/><stop offset="0.087" stop-color="#00d3dd"/><stop offset="0.130" stop-color="#09d4df"/><stop offset="0.174" stop-color="#23d7e4"/><stop offset="0.217" stop-color="#4adceb"/><stop offset="0.261" stop-color="#78e3f3"/><stop offset="0.304" stop-color="#a6eafa"/><stop offset="0.348" stop-color="#cdebff"/><stop offset="0.391" stop-color="#f2dbff"/><stop offset="0.435" stop-color="#ffcdf6"/><stop offset="0.478" stop-color="#ffb4e2"/><stop offset="0.522" stop-color="#ff97c8"/><stop offset="0.565" stop-color="#ff79ad"/><stop offset="0.609" stop-color="#ff5c91"/><stop offset="0.652" stop-color="#ff4175"/><stop offset="0.696" stop-color="#ff295c"/><stop offset="0.739" stop-color="#ff173d"/><stop offset="0.783" stop-color="#ff0a2b"/><stop offset="0.826" stop-color="#ff0c25"/><stop offset="0.870" stop-color="#ff1221"/><stop offset="0.913" stop-color="#ff161f"/><stop offset="0.957" stop-color="#ff181d"/><stop offset="1.000" stop-color="#ff1a1c"/></linearGradient><linearGradient id="c46" gradientUnits="userSpaceOnUse" x1="644.3" x2="769.0" y1="0" y2="0"><stop offset="0.000" stop-color="#00d3de"/><stop offset="0.043" stop-color="#00d2de"/><stop offset="0.087" stop-color="#00d1e0"/><stop offset="0.130" stop-color="#09d1e3"/><stop offset="0.174" stop-color="#24d4e8"/><stop offset="0.217" stop-color="#4cdaef"/><stop offset="0.261" stop-color="#79e0f7"/><stop offset="0.304" stop-color="#a6e3fd"/><stop offset="0.348" stop-color="#cdd8ff"/><stop offset="0.391" stop-color="#f2caff"/><stop offset="0.435" stop-color="#feb8f3"/><stop offset="0.478" stop-color="#ff9ede"/><stop offset="0.522" stop-color="#ff80c4"/><stop offset="0.565" stop-color="#ff62a8"/><stop offset="0.609" stop-color="#ff458d"/><stop offset="0.652" stop-color="#ff2c73"/><stop offset="0.696" stop-color="#ff175c"/><stop offset="0.739" stop-color="#ff094a"/><stop offset="0.783" stop-color="#ff013d"/><stop offset="0.826" stop-color="#ff0333"/><stop offset="0.870" stop-color="#ff062b"/><stop offset="0.913" stop-color="#ff0828"/><stop offset="0.957" stop-color="#ff0d25"/><stop offset="1.000" stop-color="#ff1023"/></linearGradient><linearGradient id="c47" gradientUnits="userSpaceOnUse" x1="644.8" x2="771.2" y1="0" y2="0"><stop offset="0.000" stop-color="#00d1e0"/><stop offset="0.043" stop-color="#00d0e1"/><stop offset="0.087" stop-color="#00cee3"/><stop offset="0.130" stop-color="#0acee7"/><stop offset="0.174" stop-color="#25d1ec"/><stop offset="0.217" stop-color="#4dd7f3"/><stop offset="0.261" stop-color="#79dafb"/><stop offset="0.304" stop-color="#a4d8ff"/><stop offset="0.348" stop-color="#dcc1ff"/><stop offset="0.391" stop-color="#f1b5ff"/><stop offset="0.435" stop-color="#fda1f0"/><stop offset="0.478" stop-color="#ff86da"/><stop offset="0.522" stop-color="#ff68c0"/><stop offset="0.565" stop-color="#ff4ba4"/><stop offset="0.609" stop-color="#ff308a"/><stop offset="0.652" stop-color="#ff1b73"/><stop offset="0.696" stop-color="#ff0a5f"/><stop offset="0.739" stop-color="#ff0150"/><stop offset="0.783" stop-color="#ff0048"/><stop offset="0.826" stop-color="#ff0042"/><stop offset="0.870" stop-color="#ff003c"/><stop offset="0.913" stop-color="#ff0235"/><stop offset="0.957" stop-color="#ff062c"/><stop offset="1.000" stop-color="#ff072a"/></linearGradient><linearGradient id="c48" gradientUnits="userSpaceOnUse" x1="645.4" x2="771.3" y1="0" y2="0"><stop offset="0.000" stop-color="#00cfe3"/><stop offset="0.043" stop-color="#00cee4"/><stop offset="0.087" stop-color="#00cce6"/><stop offset="0.130" stop-color="#09cbea"/><stop offset="0.174" stop-color="#24cef0"/><stop offset="0.217" stop-color="#49d0f7"/><stop offset="0.261" stop-color="#74d2fe"/><stop offset="0.304" stop-color="#9dc6ff"/><stop offset="0.348" stop-color="#d8aeff"/><stop offset="0.391" stop-color="#eea2ff"/><stop offset="0.435" stop-color="#fa8eef"/><stop offset="0.478" stop-color="#ff73db"/><stop offset="0.522" stop-color="#ff57c2"/><stop offset="0.565" stop-color="#ff3ca7"/><stop offset="0.609" stop-color="#ff248e"/><stop offset="0.652" stop-color="#ff1179"/><stop offset="0.696" stop-color="#ff0467"/><stop offset="0.739" stop-color="#ff005c"/><stop offset="0.783" stop-color="#ff0054"/><stop offset="0.826" stop-color="#ff004d"/><stop offset="0.870" stop-color="#ff0047"/><stop offset="0.913" stop-color="#ff0042"/><stop offset="0.957" stop-color="#ff003d"/><stop offset="1.000" stop-color="#ff003a"/></linearGradient><linearGradient id="c49" gradientUnits="userSpaceOnUse" x1="645.9" x2="768.9" y1="0" y2="0"><stop offset="0.000" stop-color="#00cde5"/><stop offset="0.043" stop-color="#00cbe7"/><stop offset="0.087" stop-color="#00c9e9"/><stop offset="0.130" stop-color="#07c8ed"/><stop offset="0.174" stop-color="#1fc9f3"/><stop offset="0.217" stop-color="#41c8fa"/><stop offset="0.261" stop-color="#69c6ff"/><stop offset="0.304" stop-color="#8fb2ff"/><stop offset="0.348" stop-color="#d09cff"/><stop offset="0.391" stop-color="#e790ff"/><stop offset="0.435" stop-color="#f47ef2"/><stop offset="0.478" stop-color="#ff66e0"/><stop offset="0.522" stop-color="#ff4cc9"/><stop offset="0.565" stop-color="#ff33b1"/><stop offset="0.609" stop-color="#ff1d99"/><stop offset="0.652" stop-color="#ff0d84"/><stop offset="0.696" stop-color="#ff0274"/><stop offset="0.739" stop-color="#ff0069"/><stop offset="0.783" stop-color="#ff0061"/><stop offset="0.826" stop-color="#ff005a"/><stop offset="0.870" stop-color="#ff0053"/><stop offset="0.913" stop-color="#ff004e"/><stop offset="0.957" stop-color="#ff0049"/><stop offset="1.000" stop-color="#ff0046"/></linearGradient><linearGradient id="c50" gradientUnits="userSpaceOnUse" x1="646.4" x2="764.3" y1="0" y2="0"><stop offset="0.000" stop-color="#00cbe8"/><stop offset="0.045" stop-color="#00c9e9"/><stop offset="0.091" stop-color="#00c7ec"/><stop offset="0.136" stop-color="#07c5f1"/><stop offset="0.182" stop-color="#1dc2f6"/><stop offset="0.227" stop-color="#3ec0fd"/><stop offset="0.273" stop-color="#63b7ff"/><stop offset="0.318" stop-color="#a291ff"/><stop offset="0.364" stop-color="#cc87ff"/><stop offset="0.409" stop-color="#e47bff"/><stop offset="0.455" stop-color="#f269f1"/><stop offset="0.500" stop-color="#fe52e0"/><stop offset="0.545" stop-color="#ff3bc9"/><stop offset="0.591" stop-color="#ff24b2"/><stop offset="0.636" stop-color="#ff129d"/><stop offset="0.682" stop-color="#ff058a"/><stop offset="0.727" stop-color="#ff007c"/><stop offset="0.773" stop-color="#ff0072"/><stop offset="0.818" stop-color="#ff006a"/><stop offset="0.864" stop-color="#ff0062"/><stop offset="0.909" stop-color="#ff005c"/><stop offset="0.955" stop-color="#ff0056"/><stop offset="1.000" stop-color="#ff0053"/></linearGradient><linearGradient id="c51" gradientUnits="userSpaceOnUse" x1="647.0" x2="759.6" y1="0" y2="0"><stop offset="0.000" stop-color="#00c8ea"/><stop offset="0.048" stop-color="#00c7ec"/><stop offset="0.095" stop-color="#00c4ef"/><stop offset="0.143" stop-color="#05bef4"/><stop offset="0.190" stop-color="#1abafa"/><stop offset="0.238" stop-color="#3ab4ff"/><stop offset="0.286" stop-color="#5da2ff"/><stop offset="0.333" stop-color="#aa7bff"/><stop offset="0.381" stop-color="#c972ff"/><stop offset="0.429" stop-color="#e166ff"/><stop offset="0.476" stop-color="#ef54f0"/><stop offset="0.524" stop-color="#fc40df"/><stop offset="0.571" stop-color="#ff2aca"/><stop offset="0.619" stop-color="#ff17b4"/><stop offset="0.667" stop-color="#ff09a0"/><stop offset="0.714" stop-color="#ff0190"/><stop offset="0.762" stop-color="#ff0083"/><stop offset="0.810" stop-color="#ff007a"/><stop offset="0.857" stop-color="#ff0071"/><stop offset="0.905" stop-color="#ff006a"/><stop offset="0.952" stop-color="#ff0064"/><stop offset="1.000" stop-color="#ff0060"/></linearGradient><linearGradient id="c52" gradientUnits="userSpaceOnUse" x1="647.5" x2="754.9" y1="0" y2="0"><stop offset="0.000" stop-color="#00c6ed"/><stop offset="0.050" stop-color="#00c5ef"/><stop offset="0.100" stop-color="#00bff3"/><stop offset="0.150" stop-color="#04b8f7"/><stop offset="0.200" stop-color="#18b2fe"/><stop offset="0.250" stop-color="#35a5ff"/><stop offset="0.300" stop-color="#5b86ff"/><stop offset="0.350" stop-color="#ac69ff"/><stop offset="0.400" stop-color="#c75eff"/><stop offset="0.450" stop-color="#df51ff"/><stop offset="0.500" stop-color="#ec41ef"/><stop offset="0.550" stop-color="#f92ede"/><stop offset="0.600" stop-color="#ff1ccb"/><stop offset="0.650" stop-color="#ff0db7"/><stop offset="0.700" stop-color="#ff03a5"/><stop offset="0.750" stop-color="#ff0096"/><stop offset="0.800" stop-color="#ff008b"/><stop offset="0.850" stop-color="#ff0081"/><stop offset="0.900" stop-color="#ff0078"/><stop offset="0.950" stop-color="#ff0071"/><stop offset="1.000" stop-color="#ff006d"/></linearGradient><linearGradient id="c53" gradientUnits="userSpaceOnUse" x1="648.0" x2="750.3" y1="0" y2="0"><stop offset="0.000" stop-color="#00c4f0"/><stop offset="0.053" stop-color="#00c1f2"/><stop offset="0.105" stop-color="#00b9f6"/><stop offset="0.158" stop-color="#03b1fb"/><stop offset="0.211" stop-color="#15a6ff"/><stop offset="0.263" stop-color="#3093ff"/><stop offset="0.316" stop-color="#7161ff"/><stop offset="0.368" stop-color="#aa55ff"/><stop offset="0.421" stop-color="#c44aff"/><stop offset="0.474" stop-color="#dc3efe"/><stop offset="0.526" stop-color="#ea2fee"/><stop offset="0.579" stop-color="#f71fde"/><stop offset="0.632" stop-color="#ff10cc"/><stop offset="0.684" stop-color="#ff05b9"/><stop offset="0.737" stop-color="#ff00a9"/><stop offset="0.789" stop-color="#ff009d"/><stop offset="0.842" stop-color="#ff0091"/><stop offset="0.895" stop-color="#ff0087"/><stop offset="0.947" stop-color="#ff007e"/><stop offset="1.000" stop-color="#ff007a"/></linearGradient><linearGradient id="c54" gradientUnits="userSpaceOnUse" x1="648.6" x2="745.6" y1="0" y2="0"><stop offset="0.000" stop-color="#00c0f2"/><stop offset="0.056" stop-color="#00bcf4"/><stop offset="0.111" stop-color="#00b4f9"/><stop offset="0.167" stop-color="#02aafe"/><stop offset="0.222" stop-color="#1298ff"/><stop offset="0.278" stop-color="#2b7cff"/><stop offset="0.333" stop-color="#8543ff"/><stop offset="0.389" stop-color="#a842ff"/><stop offset="0.444" stop-color="#c338ff"/><stop offset="0.500" stop-color="#da2dfd"/><stop offset="0.556" stop-color="#e81fed"/><stop offset="0.611" stop-color="#f512dd"/><stop offset="0.667" stop-color="#ff07ce"/><stop offset="0.722" stop-color="#ff01bd"/><stop offset="0.778" stop-color="#ff00ae"/><stop offset="0.833" stop-color="#ff00a2"/><stop offset="0.889" stop-color="#ff0097"/><stop offset="0.944" stop-color="#ff008d"/><stop offset="1.000" stop-color="#ff0088"/></linearGradient><linearGradient id="c55" gradientUnits="userSpaceOnUse" x1="649.3" x2="740.9" y1="0" y2="0"><stop offset="0.000" stop-color="#00bbf5"/><stop offset="0.059" stop-color="#00b7f7"/><stop offset="0.118" stop-color="#00aefc"/><stop offset="0.176" stop-color="#029eff"/><stop offset="0.235" stop-color="#0f89ff"/><stop offset="0.294" stop-color="#315eff"/><stop offset="0.353" stop-color="#8a39ff"/><stop offset="0.412" stop-color="#a730ff"/><stop offset="0.471" stop-color="#c227ff"/><stop offset="0.529" stop-color="#d81dfc"/><stop offset="0.588" stop-color="#e612ec"/><stop offset="0.647" stop-color="#f308dd"/><stop offset="0.706" stop-color="#ff01cf"/><stop offset="0.765" stop-color="#ff00c0"/><stop offset="0.824" stop-color="#ff00b3"/><stop offset="0.882" stop-color="#ff00a7"/><stop offset="0.941" stop-color="#ff009c"/><stop offset="1.000" stop-color="#ff0096"/></linearGradient><linearGradient id="c56" gradientUnits="userSpaceOnUse" x1="650.1" x2="736.3" y1="0" y2="0"><stop offset="0.000" stop-color="#00b6f7"/><stop offset="0.062" stop-color="#00b1fa"/><stop offset="0.125" stop-color="#00a8ff"/><stop offset="0.188" stop-color="#0192ff"/><stop offset="0.250" stop-color="#0d73ff"/><stop offset="0.312" stop-color="#4e38ff"/><stop offset="0.375" stop-color="#8b28ff"/><stop offset="0.438" stop-color="#a721ff"/><stop offset="0.500" stop-color="#c219ff"/><stop offset="0.562" stop-color="#d710fb"/><stop offset="0.625" stop-color="#e508ec"/><stop offset="0.688" stop-color="#f202de"/><stop offset="0.750" stop-color="#fe00d1"/><stop offset="0.812" stop-color="#ff00c3"/><stop offset="0.875" stop-color="#ff00b7"/><stop offset="0.938" stop-color="#ff00ab"/><stop offset="1.000" stop-color="#ff00a4"/></linearGradient><linearGradient id="c57" gradientUnits="userSpaceOnUse" x1="650.8" x2="731.6" y1="0" y2="0"><stop offset="0.000" stop-color="#00b1fa"/><stop offset="0.067" stop-color="#00acfd"/><stop offset="0.133" stop-color="#009dff"/><stop offset="0.200" stop-color="#0085ff"/><stop offset="0.267" stop-color="#0a5aff"/><stop offset="0.333" stop-color="#6919ff"/><stop offset="0.400" stop-color="#8c1aff"/><stop offset="0.467" stop-color="#a814ff"/><stop offset="0.533" stop-color="#c20dff"/><stop offset="0.600" stop-color="#d607fa"/><stop offset="0.667" stop-color="#e402eb"/><stop offset="0.733" stop-color="#f100de"/><stop offset="0.800" stop-color="#fc00d3"/><stop offset="0.867" stop-color="#ff00c6"/><stop offset="0.933" stop-color="#ff00ba"/><stop offset="1.000" stop-color="#ff00b3"/></linearGradient><linearGradient id="c58" gradientUnits="userSpaceOnUse" x1="651.5" x2="726.9" y1="0" y2="0"><stop offset="0.000" stop-color="#00acfd"/><stop offset="0.071" stop-color="#00a6ff"/><stop offset="0.143" stop-color="#0092ff"/><stop offset="0.214" stop-color="#0073ff"/><stop offset="0.286" stop-color="#1c3fff"/><stop offset="0.357" stop-color="#6913ff"/><stop offset="0.429" stop-color="#8e0eff"/><stop offset="0.500" stop-color="#aa09ff"/><stop offset="0.571" stop-color="#c305ff"/><stop offset="0.643" stop-color="#d601f9"/><stop offset="0.714" stop-color="#e400eb"/><stop offset="0.786" stop-color="#f000df"/><stop offset="0.857" stop-color="#fb00d4"/><stop offset="0.929" stop-color="#ff00c9"/><stop offset="1.000" stop-color="#ff00c1"/></linearGradient><linearGradient id="c59" gradientUnits="userSpaceOnUse" x1="652.2" x2="722.2" y1="0" y2="0"><stop offset="0.000" stop-color="#00a7ff"/><stop offset="0.077" stop-color="#009cff"/><stop offset="0.154" stop-color="#0087ff"/><stop offset="0.231" stop-color="#0061ff"/><stop offset="0.308" stop-color="#3a1eff"/><stop offset="0.385" stop-color="#740aff"/><stop offset="0.462" stop-color="#9106ff"/><stop offset="0.538" stop-color="#ac03ff"/><stop offset="0.615" stop-color="#c401ff"/><stop offset="0.692" stop-color="#d700f8"/><stop offset="0.769" stop-color="#e300ec"/><stop offset="0.846" stop-color="#ef00e0"/><stop offset="0.923" stop-color="#f900d6"/><stop offset="1.000" stop-color="#ff00d0"/></linearGradient><linearGradient id="c60" gradientUnits="userSpaceOnUse" x1="653.0" x2="717.6" y1="0" y2="0"><stop offset="0.000" stop-color="#009eff"/><stop offset="0.083" stop-color="#0092ff"/><stop offset="0.167" stop-color="#0078ff"/><stop offset="0.250" stop-color="#064aff"/><stop offset="0.333" stop-color="#5902ff"/><stop offset="0.417" stop-color="#7903ff"/><stop offset="0.500" stop-color="#9501ff"/><stop offset="0.583" stop-color="#af00ff"/><stop offset="0.667" stop-color="#c700ff"/><stop offset="0.750" stop-color="#d700f8"/><stop offset="0.833" stop-color="#e300ec"/><stop offset="0.917" stop-color="#ee00e1"/><stop offset="1.000" stop-color="#f400db"/></linearGradient><linearGradient id="c61" gradientUnits="userSpaceOnUse" x1="653.9" x2="712.9" y1="0" y2="0"><stop offset="0.000" stop-color="#0094ff"/><stop offset="0.091" stop-color="#0088ff"/><stop offset="0.182" stop-color="#0068ff"/><stop offset="0.273" stop-color="#2030ff"/><stop offset="0.364" stop-color="#5c00ff"/><stop offset="0.455" stop-color="#8000ff"/><stop offset="0.545" stop-color="#9b00ff"/><stop offset="0.636" stop-color="#b300ff"/><stop offset="0.727" stop-color="#c900ff"/><stop offset="0.818" stop-color="#d800f7"/><stop offset="0.909" stop-color="#e300ec"/><stop offset="1.000" stop-color="#ea00e5"/></linearGradient><linearGradient id="c62" gradientUnits="userSpaceOnUse" x1="654.8" x2="708.2" y1="0" y2="0"><stop offset="0.000" stop-color="#008bff"/><stop offset="0.100" stop-color="#007bff"/><stop offset="0.200" stop-color="#0054ff"/><stop offset="0.300" stop-color="#3c16ff"/><stop offset="0.400" stop-color="#6b00ff"/><stop offset="0.500" stop-color="#8700ff"/><stop offset="0.600" stop-color="#a000ff"/><stop offset="0.700" stop-color="#b600ff"/><stop offset="0.800" stop-color="#cb00ff"/><stop offset="0.900" stop-color="#d800f7"/><stop offset="1.000" stop-color="#df00f0"/></linearGradient><linearGradient id="c63" gradientUnits="userSpaceOnUse" x1="655.6" x2="703.6" y1="0" y2="0"><stop offset="0.000" stop-color="#0080ff"/><stop offset="0.111" stop-color="#006cff"/><stop offset="0.222" stop-color="#0f41ff"/><stop offset="0.333" stop-color="#5800ff"/><stop offset="0.444" stop-color="#7400ff"/><stop offset="0.556" stop-color="#8d00ff"/><stop offset="0.667" stop-color="#a400ff"/><stop offset="0.778" stop-color="#b900ff"/><stop offset="0.889" stop-color="#cc00ff"/><stop offset="1.000" stop-color="#d500fa"/></linearGradient><linearGradient id="c64" gradientUnits="userSpaceOnUse" x1="656.6" x2="698.9" y1="0" y2="0"><stop offset="0.000" stop-color="#0071ff"/><stop offset="0.125" stop-color="#005cff"/><stop offset="0.250" stop-color="#2b25ff"/><stop offset="0.375" stop-color="#5b00ff"/><stop offset="0.500" stop-color="#7b00ff"/><stop offset="0.625" stop-color="#9200ff"/><stop offset="0.750" stop-color="#a800ff"/><stop offset="0.875" stop-color="#bc00ff"/><stop offset="1.000" stop-color="#c700ff"/></linearGradient><linearGradient id="c65" gradientUnits="userSpaceOnUse" x1="657.7" x2="694.2" y1="0" y2="0"><stop offset="0.000" stop-color="#0062ff"/><stop offset="0.143" stop-color="#0947ff"/><stop offset="0.286" stop-color="#4410ff"/><stop offset="0.429" stop-color="#6a00ff"/><stop offset="0.571" stop-color="#8200ff"/><stop offset="0.714" stop-color="#9700ff"/><stop offset="0.857" stop-color="#ab00ff"/><stop offset="1.000" stop-color="#b700ff"/></linearGradient><linearGradient id="c66" gradientUnits="userSpaceOnUse" x1="658.9" x2="689.6" y1="0" y2="0"><stop offset="0.000" stop-color="#034dff"/><stop offset="0.167" stop-color="#2030ff"/><stop offset="0.333" stop-color="#5900ff"/><stop offset="0.500" stop-color="#7200ff"/><stop offset="0.667" stop-color="#8700ff"/><stop offset="0.833" stop-color="#9b00ff"/><stop offset="1.000" stop-color="#a700ff"/></linearGradient><linearGradient id="c67" gradientUnits="userSpaceOnUse" x1="660.3" x2="684.9" y1="0" y2="0"><stop offset="0.000" stop-color="#1a36ff"/><stop offset="0.200" stop-color="#3b17ff"/><stop offset="0.400" stop-color="#5c00ff"/><stop offset="0.600" stop-color="#7800ff"/><stop offset="0.800" stop-color="#8c00ff"/><stop offset="1.000" stop-color="#9700ff"/></linearGradient><linearGradient id="c68" gradientUnits="userSpaceOnUse" x1="662.0" x2="680.2" y1="0" y2="0"><stop offset="0.000" stop-color="#3a18ff"/><stop offset="0.250" stop-color="#5800ff"/><stop offset="0.500" stop-color="#6b00ff"/><stop offset="0.750" stop-color="#7e00ff"/><stop offset="1.000" stop-color="#8700ff"/></linearGradient><linearGradient id="c69" gradientUnits="userSpaceOnUse" x1="664.3" x2="675.6" y1="0" y2="0"><stop offset="0.000" stop-color="#5900ff"/><stop offset="0.333" stop-color="#5c00ff"/><stop offset="0.667" stop-color="#7100ff"/><stop offset="1.000" stop-color="#7800ff"/></linearGradient><linearGradient id="c70" gradientUnits="userSpaceOnUse" x1="666.8" x2="670.9" y1="0" y2="0"><stop offset="0.000" stop-color="#6900ff"/><stop offset="0.500" stop-color="#6900ff"/><stop offset="1.000" stop-color="#6900ff"/></linearGradient></defs>
<g clip-path="url(#gridclip)"><rect x="637" y="120" width="150" height="152" fill="#fcfcfc"/><g stroke="#eeeeee" stroke-width="1" fill="none"><path d="M637.5 270.2H783" /><path d="M637.5 255.1H783" /><path d="M637.5 240.0H783" /><path d="M637.5 224.8H783" /><path d="M637.5 209.7H783" /><path d="M637.5 194.6H783" /><path d="M637.5 179.5H783" /><path d="M637.5 164.4H783" /><path d="M637.5 149.2H783" /><path d="M637.5 134.1H783" /><path d="M637.5 122V270.2" /><path d="M646.3 122V270.2" /><path d="M655.0 122V270.2" /><path d="M663.8 122V270.2" /><path d="M672.6 122V270.2" /><path d="M681.4 122V270.2" /><path d="M690.1 122V270.2" /><path d="M698.9 122V270.2" /><path d="M707.7 122V270.2" /><path d="M716.5 122V270.2" /><path d="M725.2 122V270.2" /><path d="M734.0 122V270.2" /><path d="M742.8 122V270.2" /><path d="M751.6 122V270.2" /><path d="M760.4 122V270.2" /><path d="M769.1 122V270.2" /><path d="M777.9 122V270.2" /></g></g>
<g clip-path="url(#hs)"><rect x="649.0" y="130.0" width="4.8" height="2.5" fill="url(#c0)"/><rect x="645.5" y="132.0" width="16.3" height="2.5" fill="url(#c1)"/><rect x="642.8" y="134.0" width="23.3" height="2.5" fill="url(#c2)"/><rect x="641.9" y="136.0" width="27.8" height="2.5" fill="url(#c3)"/><rect x="641.0" y="138.0" width="32.1" height="2.5" fill="url(#c4)"/><rect x="640.1" y="140.0" width="36.0" height="2.5" fill="url(#c5)"/><rect x="639.3" y="142.0" width="39.8" height="2.5" fill="url(#c6)"/><rect x="638.5" y="144.0" width="43.3" height="2.5" fill="url(#c7)"/><rect x="638.3" y="146.0" width="46.2" height="2.5" fill="url(#c8)"/><rect x="638.0" y="148.0" width="49.0" height="2.5" fill="url(#c9)"/><rect x="637.8" y="150.0" width="51.7" height="2.5" fill="url(#c10)"/><rect x="637.6" y="152.0" width="54.3" height="2.5" fill="url(#c11)"/><rect x="637.3" y="154.0" width="57.0" height="2.5" fill="url(#c12)"/><rect x="637.1" y="156.0" width="59.5" height="2.5" fill="url(#c13)"/><rect x="636.9" y="158.0" width="62.0" height="2.5" fill="url(#c14)"/><rect x="636.7" y="160.0" width="64.5" height="2.5" fill="url(#c15)"/><rect x="636.7" y="162.0" width="66.8" height="2.5" fill="url(#c16)"/><rect x="636.8" y="164.0" width="68.9" height="2.5" fill="url(#c17)"/><rect x="636.9" y="166.0" width="71.1" height="2.5" fill="url(#c18)"/><rect x="637.0" y="168.0" width="73.2" height="2.5" fill="url(#c19)"/><rect x="637.0" y="170.0" width="75.3" height="2.5" fill="url(#c20)"/><rect x="637.1" y="172.0" width="77.5" height="2.5" fill="url(#c21)"/><rect x="637.2" y="174.0" width="79.6" height="2.5" fill="url(#c22)"/><rect x="637.3" y="176.0" width="81.7" height="2.5" fill="url(#c23)"/><rect x="637.4" y="178.0" width="83.8" height="2.5" fill="url(#c24)"/><rect x="637.4" y="180.0" width="85.9" height="2.5" fill="url(#c25)"/><rect x="637.6" y="182.0" width="87.9" height="2.5" fill="url(#c26)"/><rect x="637.9" y="184.0" width="89.8" height="2.5" fill="url(#c27)"/><rect x="638.1" y="186.0" width="91.7" height="2.5" fill="url(#c28)"/><rect x="638.4" y="188.0" width="93.7" height="2.5" fill="url(#c29)"/><rect x="638.7" y="190.0" width="95.6" height="2.5" fill="url(#c30)"/><rect x="638.9" y="192.0" width="97.5" height="2.5" fill="url(#c31)"/><rect x="639.2" y="194.0" width="99.4" height="2.5" fill="url(#c32)"/><rect x="639.5" y="196.0" width="101.3" height="2.5" fill="url(#c33)"/><rect x="639.7" y="198.0" width="103.2" height="2.5" fill="url(#c34)"/><rect x="640.0" y="200.0" width="105.1" height="2.5" fill="url(#c35)"/><rect x="640.2" y="202.0" width="107.0" height="2.5" fill="url(#c36)"/><rect x="640.6" y="204.0" width="108.8" height="2.5" fill="url(#c37)"/><rect x="641.0" y="206.0" width="110.6" height="2.5" fill="url(#c38)"/><rect x="641.4" y="208.0" width="112.4" height="2.5" fill="url(#c39)"/><rect x="641.9" y="210.0" width="114.1" height="2.5" fill="url(#c40)"/><rect x="642.3" y="212.0" width="115.9" height="2.5" fill="url(#c41)"/><rect x="642.7" y="214.0" width="117.7" height="2.5" fill="url(#c42)"/><rect x="643.1" y="216.0" width="119.5" height="2.5" fill="url(#c43)"/><rect x="643.5" y="218.0" width="121.2" height="2.5" fill="url(#c44)"/><rect x="643.9" y="220.0" width="123.0" height="2.5" fill="url(#c45)"/><rect x="644.3" y="222.0" width="124.8" height="2.5" fill="url(#c46)"/><rect x="644.8" y="224.0" width="126.4" height="2.5" fill="url(#c47)"/><rect x="645.4" y="226.0" width="125.9" height="2.5" fill="url(#c48)"/><rect x="645.9" y="228.0" width="123.0" height="2.5" fill="url(#c49)"/><rect x="646.4" y="230.0" width="117.8" height="2.5" fill="url(#c50)"/><rect x="647.0" y="232.0" width="112.6" height="2.5" fill="url(#c51)"/><rect x="647.5" y="234.0" width="107.4" height="2.5" fill="url(#c52)"/><rect x="648.0" y="236.0" width="102.2" height="2.5" fill="url(#c53)"/><rect x="648.6" y="238.0" width="97.0" height="2.5" fill="url(#c54)"/><rect x="649.3" y="240.0" width="91.6" height="2.5" fill="url(#c55)"/><rect x="650.1" y="242.0" width="86.2" height="2.5" fill="url(#c56)"/><rect x="650.8" y="244.0" width="80.8" height="2.5" fill="url(#c57)"/><rect x="651.5" y="246.0" width="75.4" height="2.5" fill="url(#c58)"/><rect x="652.2" y="248.0" width="70.0" height="2.5" fill="url(#c59)"/><rect x="653.0" y="250.0" width="64.6" height="2.5" fill="url(#c60)"/><rect x="653.9" y="252.0" width="59.0" height="2.5" fill="url(#c61)"/><rect x="654.8" y="254.0" width="53.5" height="2.5" fill="url(#c62)"/><rect x="655.6" y="256.0" width="48.0" height="2.5" fill="url(#c63)"/><rect x="656.6" y="258.0" width="42.3" height="2.5" fill="url(#c64)"/><rect x="657.7" y="260.0" width="36.5" height="2.5" fill="url(#c65)"/><rect x="658.9" y="262.0" width="30.7" height="2.5" fill="url(#c66)"/><rect x="660.3" y="264.0" width="24.6" height="2.5" fill="url(#c67)"/><rect x="662.0" y="266.0" width="18.2" height="2.5" fill="url(#c68)"/><rect x="664.3" y="268.0" width="11.3" height="2.5" fill="url(#c69)"/><rect x="666.8" y="270.0" width="4.1" height="2.5" fill="url(#c70)"/></g>
<path d="M669.0,270.2 668.9,270.2 668.5,270.1 668.1,269.8 667.3,269.2 666.7,268.7 665.8,268.0 664.8,267.2 663.6,266.0 662.0,264.3 660.0,261.3 657.3,256.5 654.0,248.8 649.9,237.5 645.7,221.7 641.8,202.1 639.0,181.1 638.2,161.6 640.0,145.7 644.5,135.4 650.9,131.8 658.2,133.0 665.5,136.4 672.4,140.5 679.1,145.0 685.6,150.0 692.1,155.4 698.6,161.0 705.0,166.7 711.5,172.5 717.9,178.4 724.2,184.1 730.3,189.7 736.1,195.1 741.6,200.2 746.6,204.8 751.0,208.8 754.8,212.3 758.0,215.2 760.6,217.6 762.7,219.5 765.6,222.2 767.6,224.1 769.6,225.9 770.5,226.7" fill="none" stroke="#141414" stroke-width=".95" stroke-linejoin="round"/>
<rect x="637.1" y="122" width=".9" height="151" fill="#4a4a4a"/>
<g fill="#202020"><rect x="631.2" y="269.70" width="4.4" height="1"/><rect x="631.2" y="254.58" width="4.4" height="1"/><rect x="631.2" y="239.46" width="4.4" height="1"/><rect x="631.2" y="224.34" width="4.4" height="1"/><rect x="631.2" y="209.22" width="4.4" height="1"/><rect x="631.2" y="194.10" width="4.4" height="1"/><rect x="631.2" y="178.98" width="4.4" height="1"/><rect x="631.2" y="163.86" width="4.4" height="1"/><rect x="631.2" y="148.74" width="4.4" height="1"/><rect x="631.2" y="133.62" width="4.4" height="1"/><rect x="637.00" y="271.2" width="1" height="3.6"/><rect x="672.10" y="271.2" width="1" height="3.6"/><rect x="707.20" y="271.2" width="1" height="3.6"/><rect x="742.30" y="271.2" width="1" height="3.6"/><rect x="777.40" y="271.2" width="1" height="3.6"/></g>
</svg>
<div style="left:700px;top:290px;width:15px;height:9px;overflow:hidden;"><span style="position:absolute;left:5px;top:2.5px;font-size:9.4px;line-height:1;color:#181818">x</span></div>
<div class="wh" style="left:841.7px;top:111px;width:60.3px;height:14px;"></div>
<div class="dd" style="left:903.4px;top:111px;width:12.2px;height:13.2px;"></div>
<div class="btn" style="left:840.5px;top:147.3px;width:78.9px;height:42.1px;"></div>
<div class="btn" style="left:840.5px;top:218.5px;width:76.9px;height:39.2px;"></div>
<div class="wh" style="left:838px;top:283.4px;width:72.2px;height:15.6px;"></div>
<div class="dd" style="left:912px;top:284.6px;width:11.6px;height:13.4px;"></div>
<svg style="left:0;top:0" width="1016" height="574">
<path d="M849.6 234H859.4L863 241V245.6H846V241Z" fill="#f3f3f3" stroke="#9a9a9a" stroke-width=".8" stroke-linejoin="round"/>
<path d="M846 241H863V245.6H846Z" fill="#dedede" stroke="#909090" stroke-width=".8" stroke-linejoin="round"/>
<rect x="848.2" y="242.9" width="8" height=".9" fill="#6f6f6f"/>
<path d="M848 233.8C847.5 229.8 851.8 228 855.3 229.3C857.6 230.3 858.5 232.5 858.3 234.8H860.7L855.2 240.7L849.9 234.8H852.7C852.7 233.1 852 231.9 850.8 231.9C849.6 231.9 849.1 232.9 848 233.8Z" fill="#3f7fd0" stroke="#2f68b4" stroke-width=".5" stroke-linejoin="round"/>
</svg>
<div style="left:474.7px;top:306px;width:455px;height:170.3px;background:linear-gradient(90deg,#d7d7d7 0,#d3d3d3 7px,#c2c2c2 10px,#c1c1c1 calc(100% - 10px),#adadad calc(100% - 8px),#8f8f8f 100%);border-top:1.3px solid #dadada;border-bottom:1.2px solid #858585;"></div>
<div style="left:540.4px;top:313.7px;width:371.6px;height:128.2px;background:#000"></div>
<svg style="left:0;top:0" width="1016" height="574" viewBox="0 0 1016 574">
<defs><linearGradient id="sp" gradientUnits="userSpaceOnUse" x1="565.1" x2="895.5" y1="0" y2="0"><stop offset="0.0000" stop-color="#610061"/><stop offset="0.0498" stop-color="#8300b5"/><stop offset="0.0995" stop-color="#6a00ff"/><stop offset="0.1493" stop-color="#0000ff"/><stop offset="0.2114" stop-color="#0092ff"/><stop offset="0.2736" stop-color="#00ffff"/><stop offset="0.2985" stop-color="#00ff92"/><stop offset="0.3234" stop-color="#00ff00"/><stop offset="0.4104" stop-color="#92ff00"/><stop offset="0.4975" stop-color="#ffff00"/><stop offset="0.5771" stop-color="#ff9400"/><stop offset="0.6592" stop-color="#ff0000"/><stop offset="0.7960" stop-color="#ff0000"/><stop offset="0.8955" stop-color="#b50000"/><stop offset="1.0000" stop-color="#5d0000"/></linearGradient><clipPath id="spc"><path d="M565.1 441.9 L565.1 441.4 L597.9 440.9 L622.6 440.5 L630.0 441.5 L640.1 441.1 L645.2 440.4 L649.7 438.4 L652.7 434.3 L655.3 428.8 L657.3 421.2 L659.0 411.1 L660.8 401.0 L662.8 388.4 L664.9 375.7 L666.6 363.1 L668.4 351.7 L670.4 337.8 L672.2 329.0 L674.2 322.2 L676.0 318.6 L677.5 317.6 L679.0 318.1 L680.5 320.2 L682.3 324.7 L684.3 330.3 L686.1 335.3 L688.1 340.4 L690.1 345.4 L691.9 349.2 L694.4 352.7 L696.9 355.5 L699.5 358.0 L702.0 360.1 L704.5 362.1 L707.0 364.4 L709.6 367.1 L712.1 370.2 L714.6 373.7 L717.1 377.7 L719.7 381.8 L722.2 385.8 L724.7 390.4 L727.2 394.7 L729.8 398.7 L732.3 402.5 L734.8 406.3 L737.4 409.8 L740.4 413.1 L743.7 416.4 L746.7 419.2 L750.0 421.7 L753.0 424.0 L756.3 426.0 L759.3 427.8 L762.6 429.5 L765.6 430.8 L768.9 432.1 L772.0 433.3 L775.2 434.3 L778.3 435.1 L781.6 435.6 L786.6 436.1 L791.7 436.5 L800.0 436.9 L795.2 436.6 L803.4 437.4 L811.7 438.6 L819.9 439.8 L828.1 440.6 L840.4 440.2 L851.1 439.6 L856.9 440.6 L877.4 440.9 L895.5 441.3 L895.5 441.9Z"/></clipPath></defs>
<path d="M565.1 441.9 L565.1 441.4 L597.9 440.9 L622.6 440.5 L630.0 441.5 L640.1 441.1 L645.2 440.4 L649.7 438.4 L652.7 434.3 L655.3 428.8 L657.3 421.2 L659.0 411.1 L660.8 401.0 L662.8 388.4 L664.9 375.7 L666.6 363.1 L668.4 351.7 L670.4 337.8 L672.2 329.0 L674.2 322.2 L676.0 318.6 L677.5 317.6 L679.0 318.1 L680.5 320.2 L682.3 324.7 L684.3 330.3 L686.1 335.3 L688.1 340.4 L690.1 345.4 L691.9 349.2 L694.4 352.7 L696.9 355.5 L699.5 358.0 L702.0 360.1 L704.5 362.1 L707.0 364.4 L709.6 367.1 L712.1 370.2 L714.6 373.7 L717.1 377.7 L719.7 381.8 L722.2 385.8 L724.7 390.4 L727.2 394.7 L729.8 398.7 L732.3 402.5 L734.8 406.3 L737.4 409.8 L740.4 413.1 L743.7 416.4 L746.7 419.2 L750.0 421.7 L753.0 424.0 L756.3 426.0 L759.3 427.8 L762.6 429.5 L765.6 430.8 L768.9 432.1 L772.0 433.3 L775.2 434.3 L778.3 435.1 L781.6 435.6 L786.6 436.1 L791.7 436.5 L800.0 436.9 L795.2 436.6 L803.4 437.4 L811.7 438.6 L819.9 439.8 L828.1 440.6 L840.4 440.2 L851.1 439.6 L856.9 440.6 L877.4 440.9 L895.5 441.3 L895.5 441.9Z" fill="url(#sp)"/>
<g clip-path="url(#spc)" fill="#000" fill-opacity=".72"><rect x="640.91" y="314" width="1" height="128"/><rect x="650.84" y="314" width="1" height="128"/><rect x="660.77" y="314" width="1" height="128"/><rect x="670.70" y="314" width="1" height="128"/><rect x="680.63" y="314" width="1" height="128"/><rect x="690.56" y="314" width="1" height="128"/><rect x="700.49" y="314" width="1" height="128"/><rect x="710.42" y="314" width="1" height="128"/><rect x="720.35" y="314" width="1" height="128"/><rect x="730.28" y="314" width="1" height="128"/><rect x="740.21" y="314" width="1" height="128"/><rect x="750.14" y="314" width="1" height="128"/><rect x="760.07" y="314" width="1" height="128"/><rect x="770.00" y="314" width="1" height="128"/><rect x="779.93" y="314" width="1" height="128"/><rect x="789.86" y="314" width="1" height="128"/><rect x="799.79" y="314" width="1" height="128"/><rect x="809.72" y="314" width="1" height="128"/><rect x="819.65" y="314" width="1" height="128"/><rect x="829.58" y="314" width="1" height="128"/><rect x="839.51" y="314" width="1" height="128"/><rect x="849.44" y="314" width="1" height="128"/><rect x="859.37" y="314" width="1" height="128"/><rect x="869.30" y="314" width="1" height="128"/><rect x="879.23" y="314" width="1" height="128"/><rect x="889.16" y="314" width="1" height="128"/></g>
<g fill="#202020"><rect x="534.6" y="441.10" width="4.6" height="1"/><rect x="534.6" y="423.00" width="4.6" height="1"/><rect x="534.6" y="404.90" width="4.6" height="1"/><rect x="534.6" y="386.80" width="4.6" height="1"/><rect x="534.6" y="368.70" width="4.6" height="1"/><rect x="534.6" y="350.60" width="4.6" height="1"/><rect x="534.6" y="332.50" width="4.6" height="1"/><rect x="534.6" y="314.40" width="4.6" height="1"/><rect x="540.20" y="442.6" width="1" height="3.6"/><rect x="581.40" y="442.6" width="1" height="3.6"/><rect x="622.60" y="442.6" width="1" height="3.6"/><rect x="663.80" y="442.6" width="1" height="3.6"/><rect x="705.00" y="442.6" width="1" height="3.6"/><rect x="746.20" y="442.6" width="1" height="3.6"/><rect x="787.40" y="442.6" width="1" height="3.6"/><rect x="828.60" y="442.6" width="1" height="3.6"/><rect x="869.80" y="442.6" width="1" height="3.6"/><rect x="911.00" y="442.6" width="1" height="3.6"/></g>
</svg>
<div style="left:460.5px;top:480px;width:372.5px;height:66.8px;border-left:1px solid #5c5c5c;border-bottom:1px solid #777;border-right:1px solid #777;"></div>
<div class="btn" style="left:464.3px;top:491.6px;width:79.3px;height:42px;"></div>
<div class="btn" style="left:555px;top:491.6px;width:79.6px;height:42px;"></div>
<div class="btn" style="left:646px;top:491.6px;width:79.4px;height:42px;"></div>
<div class="btn" style="left:735.5px;top:491.6px;width:84.1px;height:42px;"></div>
<div class="btn" style="left:840.7px;top:482.4px;width:104.3px;height:57.1px;box-shadow:inset 0 0 0 1px rgba(255,255,255,.55),1px 1px 1px rgba(0,0,0,.25);"></div>
<svg style="left:0;top:0" width="1016" height="574"><defs><linearGradient id="exg" x1="0" y1="0" x2="0" y2="1"><stop offset="0" stop-color="#ee4452"/><stop offset=".5" stop-color="#d81828"/><stop offset="1" stop-color="#b40414"/></linearGradient></defs>
<path d="M851.2 501H858.6L863.8 506.1V513.4L858.6 518.5H851.2L845.9 513.4V506.1Z" fill="url(#exg)" stroke="#a00c18" stroke-width=".7"/>
<path d="M851.6 506.7L858.3 513.3M858.3 506.7L851.6 513.3" stroke="#fff" stroke-width="2.1" stroke-linecap="round"/>
</svg>
<svg style="left:945px;top:548px" width="45" height="22" viewBox="0 0 45 22"><path d="M8.5 15.2L37 6" stroke="#1ea2e8" stroke-width="1.3" stroke-linecap="round" fill="none"/></svg>
<span class="t" style="left:49.19px;top:1.67px;font-size:29.33px;">手动界面</span>
<span class="t" style="left:80.78px;top:46.34px;font-size:9.5px;letter-spacing:-0.075px;">Manual TEST.vi</span>
<span class="t" style="left:75.87px;top:69.11px;font-size:9.4px;font-weight:bold;letter-spacing:0.088px;">PG Control</span>
<span class="t" style="left:234.68px;top:69.11px;font-size:9.4px;font-weight:bold;transform-origin:10.22px 4.75px;transform:scaleX(0.965);">CCD</span>
<span class="t" style="left:362.68px;top:67.81px;font-size:9.4px;font-weight:bold;">Power</span>
<span class="t" style="left:109.51px;top:105.44px;font-size:9.6px;color:#20242c;letter-spacing:-0.077px;">Setting</span>
<span class="t" style="left:149.87px;top:121.65px;font-size:9.4px;font-weight:bold;letter-spacing:-0.125px;">CC/CV</span>
<span class="t" style="left:190.47px;top:122px;font-size:9.5px;transform-origin:6.85px 4.8px;transform:scaleX(0.918);">CV</span>
<span class="t" style="left:150.19px;top:157.23px;font-size:9.5px;letter-spacing:0.105px;">Voltage(V)</span>
<span class="t" style="left:216.9px;top:157.41px;font-size:9.4px;">5</span>
<span class="t" style="left:167.78px;top:181.73px;font-size:9.5px;letter-spacing:-0.249px;">OIP(A)</span>
<span class="t" style="left:211.2px;top:181.73px;font-size:9.5px;letter-spacing:-0.489px;">0.01</span>
<span class="t" style="left:258.56px;top:108.34px;font-size:25.07px;color:#e0201c;transform-origin:47.83px 11.66px;transform:scaleX(0.865);">POWER</span>
<span class="t" style="left:349.33px;top:107.7px;font-size:25.28px;font-family:'Liberation Serif','Noto Serif CJK SC',serif;color:#e0201c;">设定</span>
<span class="t" style="left:305.03px;top:160.61px;font-size:9.4px;font-weight:bold;letter-spacing:0.461px;">Output</span>
<span class="t" style="left:105.59px;top:229.64px;font-size:9.6px;color:#20242c;letter-spacing:0.125px;">Measurement</span>
<span class="t" style="left:115.01px;top:273.23px;font-size:9.5px;letter-spacing:0.160px;">Voltage(V)</span>
<span class="t" style="left:198.15px;top:273.31px;font-size:9.4px;">5</span>
<span class="t" style="left:257.9px;top:273.23px;font-size:9.5px;">Current(A)</span>
<span class="t" style="left:326.27px;top:273.23px;font-size:9.5px;letter-spacing:-0.040px;">0.00273618</span>
<span class="t" style="left:78.47px;top:353.95px;font-size:9.4px;font-weight:bold;letter-spacing:-0.031px;">Axis Jog</span>
<span class="t" style="left:185.66px;top:355.19px;font-size:9.4px;font-weight:bold;letter-spacing:0.155px;">Axis Move</span>
<span class="t" style="left:300.9px;top:355.09px;font-size:9.4px;font-weight:bold;letter-spacing:0.242px;">Move Center Offset</span>
<span class="t" style="left:282.03px;top:355.2px;font-size:25.94px;font-family:'Liberation Serif','Noto Serif CJK SC',serif;color:#e0201c;font-weight:300;">各轴移动</span>
<span class="t" style="left:87.83px;top:383.94px;font-size:9.6px;color:#20242c;transform-origin:7.98px 5.57px;transform:scaleX(1.019);">mm</span>
<span class="t" style="left:134.54px;top:398.4px;font-size:9.6px;font-weight:bold;">X</span>
<span class="t" style="left:147.36px;top:398.45px;font-size:9.4px;font-weight:bold;">-0.001</span>
<span class="t" style="left:222.9px;top:397.95px;font-size:9.6px;font-weight:bold;">Y</span>
<span class="t" style="left:238.87px;top:398.45px;font-size:9.4px;font-weight:bold;letter-spacing:0.119px;">-0.164</span>
<span class="t" style="left:344.09px;top:397.95px;font-size:9.6px;font-weight:bold;">Z</span>
<span class="t" style="left:356.61px;top:398.45px;font-size:9.4px;font-weight:bold;letter-spacing:0.035px;">-0.001</span>
<span class="t" style="left:192.4px;top:416.66px;font-size:9.5px;transform-origin:6.71px 4.84px;transform:scaleX(0.985);">UP</span>
<span class="t" style="left:345.31px;top:420.45px;font-size:9.5px;letter-spacing:0.292px;">Forward</span>
<span class="t" style="left:154.78px;top:444.85px;font-size:9.5px;">Left</span>
<span class="t" style="left:225.08px;top:444.7px;font-size:9.5px;letter-spacing:-0.085px;">Right</span>
<span class="t" style="left:187.25px;top:474.86px;font-size:9.5px;letter-spacing:0.068px;">Down</span>
<span class="t" style="left:343.59px;top:477.95px;font-size:9.5px;letter-spacing:0.269px;">Backward</span>
<span class="t" style="left:100.38px;top:500.03px;font-size:11.71px;font-family:'Liberation Serif','Noto Serif CJK SC',serif;font-weight:bold;">Change_Speed(%)</span>
<span class="t" style="left:104.1px;top:531.45px;font-size:9.4px;color:#181818;">1</span>
<span class="t" style="left:128.73px;top:531.45px;font-size:9.4px;color:#181818;">20</span>
<span class="t" style="left:157.16px;top:531.45px;font-size:9.4px;color:#181818;">40</span>
<span class="t" style="left:185.84px;top:531.45px;font-size:9.4px;color:#181818;">60</span>
<span class="t" style="left:214.22px;top:531.45px;font-size:9.4px;color:#181818;">80</span>
<span class="t" style="left:240.07px;top:531.45px;font-size:9.4px;color:#181818;">100</span>
<span class="t" style="left:268.46px;top:531.45px;font-size:9.4px;color:#181818;">120</span>
<span class="t" style="left:297.16px;top:531.45px;font-size:9.4px;color:#181818;">140</span>
<span class="t" style="left:325.42px;top:531.45px;font-size:9.4px;color:#181818;">160</span>
<span class="t" style="left:354.3px;top:531.45px;font-size:9.4px;color:#181818;">180</span>
<span class="t" style="left:382.83px;top:531.45px;font-size:9.4px;color:#181818;">200</span>
<span class="t" style="left:464.57px;top:68.11px;font-size:9.4px;font-weight:bold;letter-spacing:0.169px;">Lxy&amp;Spetrum Measure</span>
<span class="t" style="left:476.33px;top:91.44px;font-size:9.6px;color:#20242c;">Tristimuius</span>
<span class="t" style="left:476.54px;top:106.2px;font-size:9.6px;font-weight:bold;">X</span>
<span class="t" style="left:476.65px;top:122.65px;font-size:9.6px;font-weight:bold;">Y</span>
<span class="t" style="left:476.96px;top:141.15px;font-size:9.6px;font-weight:bold;">Z</span>
<span class="t" style="left:525.1px;top:108.01px;font-size:9.1px;font-family:'Liberation Serif','Noto Serif CJK SC',serif;font-weight:bold;">2860</span>
<span class="t" style="left:524.47px;top:126.01px;font-size:9.1px;font-family:'Liberation Serif','Noto Serif CJK SC',serif;font-weight:bold;">5879</span>
<span class="t" style="left:522.17px;top:142.71px;font-size:9.1px;font-family:'Liberation Serif','Noto Serif CJK SC',serif;font-weight:bold;">564.4</span>
<span class="t" style="left:476.35px;top:166.45px;font-size:9.8px;font-weight:bold;">L</span>
<span class="t" style="left:525.36px;top:168.53px;font-size:7.7px;font-family:'Liberation Serif','Noto Serif CJK SC',serif;font-weight:bold;color:#1c1c1c;">5879</span>
<span class="t" style="left:476.79px;top:184.72px;font-size:9.8px;font-weight:bold;">x</span>
<span class="t" style="left:522.34px;top:187.53px;font-size:7.7px;font-family:'Liberation Serif','Noto Serif CJK SC',serif;font-weight:bold;color:#1c1c1c;">0.3074</span>
<span class="t" style="left:476.71px;top:203.54px;font-size:9.8px;font-weight:bold;">y</span>
<span class="t" style="left:522.54px;top:206.43px;font-size:7.7px;font-family:'Liberation Serif','Noto Serif CJK SC',serif;font-weight:bold;color:#1c1c1c;">0.6319</span>
<span class="t" style="left:475.29px;top:223.35px;font-size:9.8px;font-weight:bold;">u'</span>
<span class="t" style="left:522.34px;top:225.43px;font-size:7.7px;font-family:'Liberation Serif','Noto Serif CJK SC',serif;font-weight:bold;color:#1c1c1c;">0.1234</span>
<span class="t" style="left:475.79px;top:242.3px;font-size:9.8px;font-weight:bold;">v'</span>
<span class="t" style="left:522.55px;top:244.33px;font-size:7.7px;font-family:'Liberation Serif','Noto Serif CJK SC',serif;font-weight:bold;color:#1c1c1c;">0.5705</span>
<span class="t" style="left:469.18px;top:260.95px;font-size:9.8px;font-weight:bold;">CCT</span>
<span class="t" style="left:525.36px;top:263.03px;font-size:7.7px;font-family:'Liberation Serif','Noto Serif CJK SC',serif;font-weight:bold;color:#1c1c1c;">5909</span>
<span class="t" style="left:470.22px;top:280.1px;font-size:9.8px;font-weight:bold;">Dev</span>
<span class="t" style="left:522.53px;top:282.23px;font-size:7.7px;font-family:'Liberation Serif','Noto Serif CJK SC',serif;font-weight:bold;color:#1c1c1c;">0.1038</span>
<span class="t" style="left:591.58px;top:95px;font-size:9.5px;letter-spacing:-0.393px;">CIE1931</span>
<span class="t" style="left:709.63px;top:96.3px;font-size:9.5px;letter-spacing:-0.409px;">CIE1976</span>
<span class="t" style="left:611.99px;top:265.45px;font-size:9.4px;color:#181818;">0.00</span>
<span class="t" style="left:611.99px;top:250.33px;font-size:9.4px;color:#181818;">0.10</span>
<span class="t" style="left:611.99px;top:235.21px;font-size:9.4px;color:#181818;">0.20</span>
<span class="t" style="left:611.99px;top:220.09px;font-size:9.4px;color:#181818;">0.30</span>
<span class="t" style="left:611.99px;top:204.97px;font-size:9.4px;color:#181818;">0.40</span>
<span class="t" style="left:611.99px;top:189.85px;font-size:9.4px;color:#181818;">0.50</span>
<span class="t" style="left:611.99px;top:174.73px;font-size:9.4px;color:#181818;">0.60</span>
<span class="t" style="left:611.99px;top:158.61px;font-size:9.4px;color:#181818;">0.70</span>
<span class="t" style="left:611.99px;top:144.49px;font-size:9.4px;color:#181818;">0.80</span>
<span class="t" style="left:611.99px;top:129.37px;font-size:9.4px;color:#181818;">0.90</span>
<span class="t" style="left:628.35px;top:276.95px;font-size:9.4px;color:#181818;">0.00</span>
<span class="t" style="left:663.45px;top:276.95px;font-size:9.4px;color:#181818;">0.20</span>
<span class="t" style="left:698.61px;top:276.95px;font-size:9.4px;color:#181818;">0.40</span>
<span class="t" style="left:733.82px;top:276.95px;font-size:9.4px;color:#181818;">0.60</span>
<span class="t" style="left:768.78px;top:276.95px;font-size:9.4px;color:#181818;">0.80</span>
<span class="t" style="left:601.45px;top:196.51px;font-size:9.4px;color:#181818;transform-origin:2.35px 6.49px;transform:rotate(-90deg);">y</span>
<span class="t" style="left:644.91px;top:123.8px;font-size:6.6px;font-family:'Liberation Serif','Noto Serif CJK SC',serif;color:#2c2c9c;transform-origin:5.02px 3.4px;transform:scaleX(1.131);">520</span>
<span class="t" style="left:681.23px;top:137.6px;font-size:6.6px;font-family:'Liberation Serif','Noto Serif CJK SC',serif;color:#2c2c9c;transform-origin:5.02px 3.4px;transform:scaleX(1.131);">540</span>
<span class="t" style="left:707.21px;top:160.4px;font-size:6.6px;font-family:'Liberation Serif','Noto Serif CJK SC',serif;color:#2c2c9c;transform-origin:5.02px 2.4px;transform:scaleX(1.131);">560</span>
<span class="t" style="left:732.89px;top:183.1px;font-size:6.6px;font-family:'Liberation Serif','Noto Serif CJK SC',serif;color:#2c2c9c;transform-origin:5.02px 2.4px;transform:scaleX(1.131);">580</span>
<span class="t" style="left:753.93px;top:202.2px;font-size:6.6px;font-family:'Liberation Serif','Noto Serif CJK SC',serif;color:#2c2c9c;transform-origin:4.98px 2.4px;transform:scaleX(1.123);">600</span>
<span class="t" style="left:765.27px;top:212px;font-size:6.6px;font-family:'Liberation Serif','Noto Serif CJK SC',serif;color:#2c2c9c;transform-origin:4.98px 3.4px;transform:scaleX(1.123);">620</span>
<span class="t" style="left:639.17px;top:248.2px;font-size:6.6px;font-family:'Liberation Serif','Noto Serif CJK SC',serif;color:#2c2c9c;transform-origin:4.88px 2.4px;transform:scaleX(1.100);">480</span>
<span class="t" style="left:649.53px;top:266.3px;font-size:6.6px;font-family:'Liberation Serif','Noto Serif CJK SC',serif;color:#2c2c9c;transform-origin:4.88px 2.4px;transform:scaleX(1.100);">460</span>
<span class="t" style="left:842.39px;top:95.5px;font-size:9.5px;letter-spacing:0.170px;">Apercture</span>
<span class="t" style="left:860.02px;top:112.7px;font-size:9.5px;letter-spacing:-0.186px;">0.125</span>
<span class="t" style="left:860.38px;top:163.75px;font-size:9.4px;font-weight:bold;letter-spacing:0.145px;">Measure</span>
<span class="t" style="left:879.67px;top:232.55px;font-size:9.4px;font-weight:bold;letter-spacing:-0.606px;">Save</span>
<span class="t" style="left:839.96px;top:285.75px;font-size:9.4px;font-weight:bold;letter-spacing:-0.367px;">Color Spectrum</span>
<span class="t" style="left:528.38px;top:435.65px;font-size:9.4px;color:#181818;">0</span>
<span class="t" style="left:510.11px;top:417.51px;font-size:9.4px;color:#181818;">0.025</span>
<span class="t" style="left:515.34px;top:400.37px;font-size:9.4px;color:#181818;">0.05</span>
<span class="t" style="left:510.11px;top:382.23px;font-size:9.4px;color:#181818;">0.075</span>
<span class="t" style="left:520.72px;top:364.09px;font-size:9.4px;color:#181818;">0.1</span>
<span class="t" style="left:510.11px;top:345.95px;font-size:9.4px;color:#181818;">0.125</span>
<span class="t" style="left:515.34px;top:327.81px;font-size:9.4px;color:#181818;">0.15</span>
<span class="t" style="left:510.11px;top:308.67px;font-size:9.4px;color:#181818;">0.175</span>
<span class="t" style="left:532.43px;top:448.75px;font-size:9.4px;color:#181818;">350</span>
<span class="t" style="left:573.61px;top:448.75px;font-size:9.4px;color:#181818;">400</span>
<span class="t" style="left:614.74px;top:448.75px;font-size:9.4px;color:#181818;">450</span>
<span class="t" style="left:655.67px;top:448.75px;font-size:9.4px;color:#181818;">500</span>
<span class="t" style="left:696.9px;top:448.75px;font-size:9.4px;color:#181818;">550</span>
<span class="t" style="left:738.18px;top:448.75px;font-size:9.4px;color:#181818;">600</span>
<span class="t" style="left:779.37px;top:448.75px;font-size:9.4px;color:#181818;">650</span>
<span class="t" style="left:820.36px;top:448.75px;font-size:9.4px;color:#181818;">700</span>
<span class="t" style="left:861.6px;top:448.75px;font-size:9.4px;color:#181818;">750</span>
<span class="t" style="left:902.75px;top:448.75px;font-size:9.4px;color:#181818;">800</span>
<span class="t" style="left:683.19px;top:462.7px;font-size:9.5px;color:#181818;letter-spacing:0.173px;">WaveLength ( nm )</span>
<span class="t" style="left:450.17px;top:373.8px;font-size:9.5px;color:#181818;transform-origin:51.53px 5.6px;transform:rotate(-90deg) scaleX(1.064);">Strength ( watts/sr/m^2 )</span>
<span class="t" style="left:481.54px;top:506.61px;font-size:9.4px;font-weight:bold;letter-spacing:0.257px;">Go Home</span>
<span class="t" style="left:568.13px;top:506.61px;font-size:9.4px;font-weight:bold;letter-spacing:0.237px;">Go To Zero</span>
<span class="t" style="left:665.85px;top:506.61px;font-size:9.4px;font-weight:bold;letter-spacing:0.081px;">Set Zero</span>
<span class="t" style="left:750.72px;top:506.61px;font-size:9.4px;font-weight:bold;letter-spacing:0.059px;">Save Offset</span>
<span class="t" style="left:888.72px;top:499.27px;font-size:25.1px;font-weight:bold;letter-spacing:-0.917px;">Exit</span>
</body></html>
